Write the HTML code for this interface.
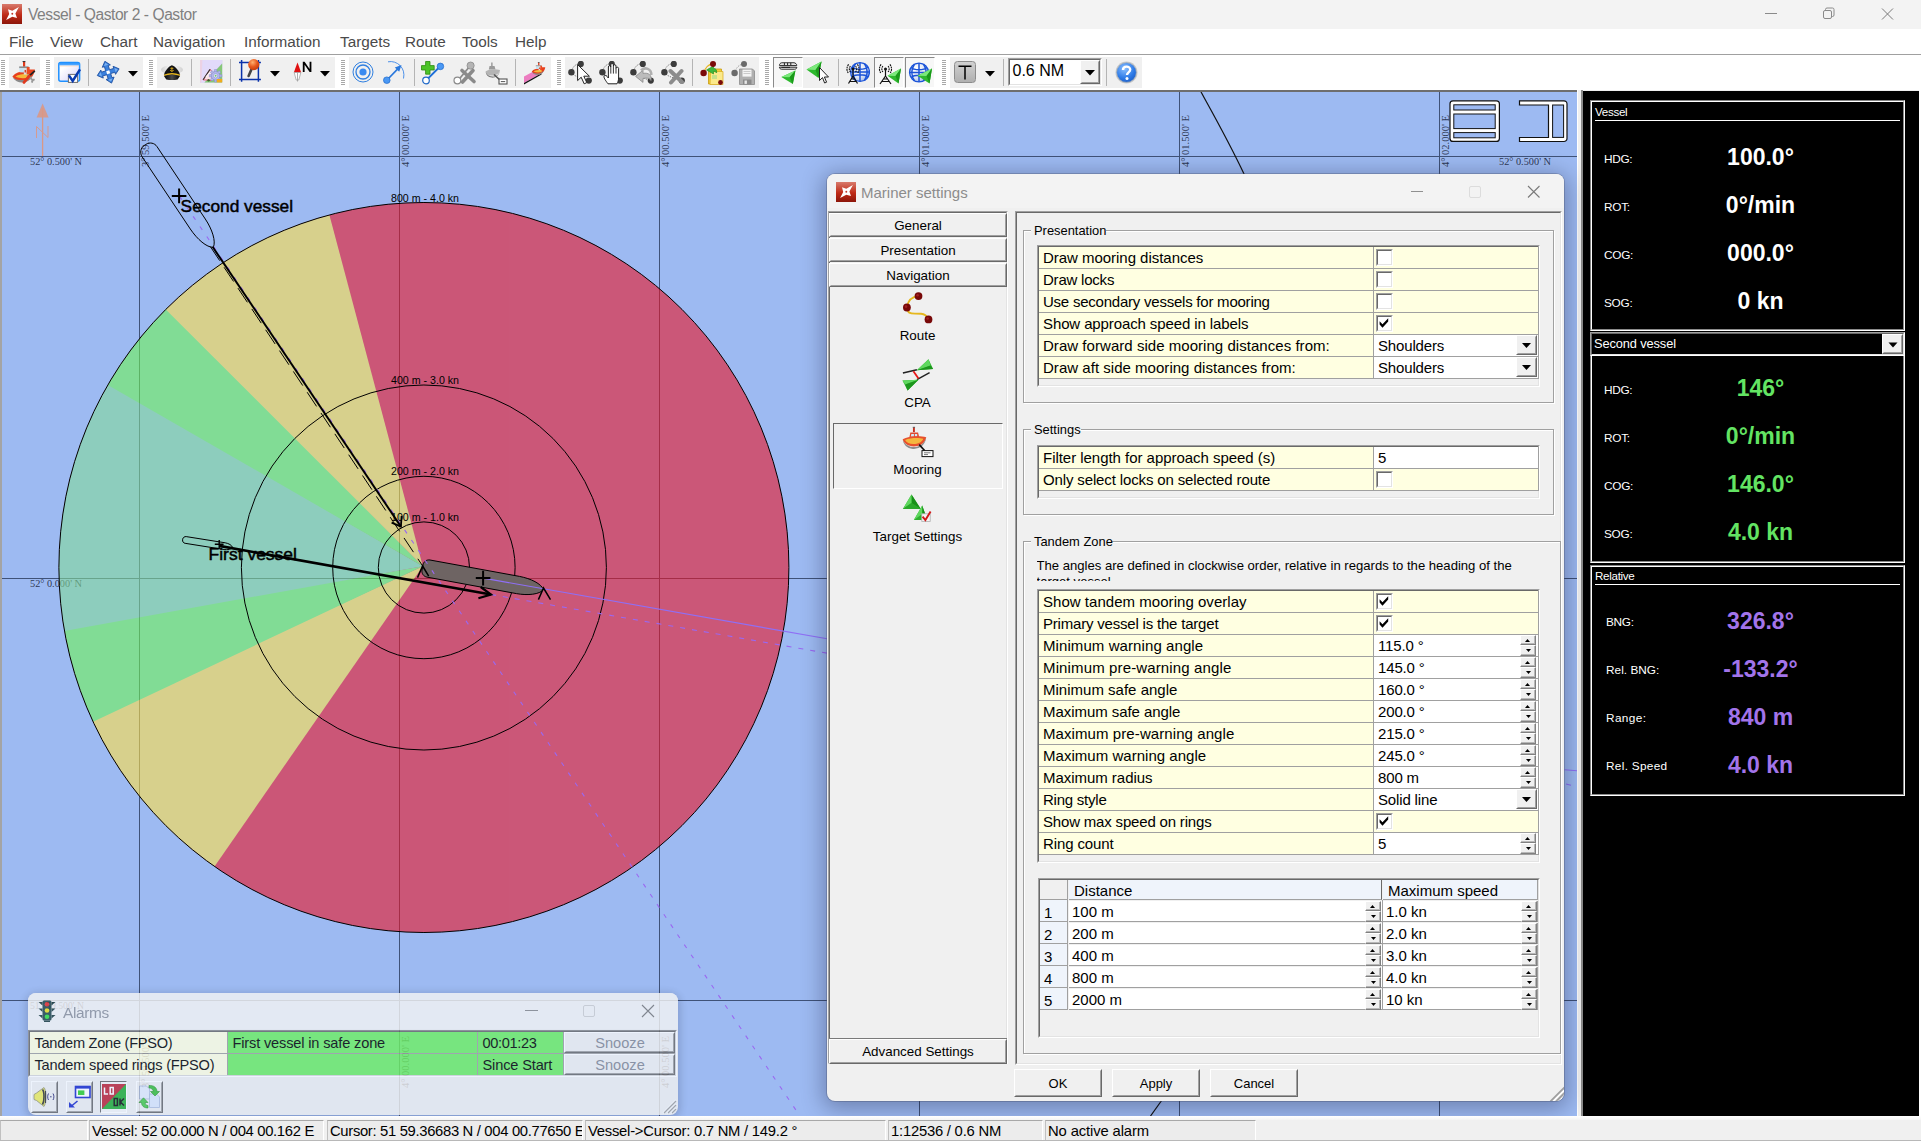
<!DOCTYPE html>
<html><head><meta charset="utf-8"><title>Qastor</title><style>
*{box-sizing:border-box;margin:0;padding:0}
html,body{width:1921px;height:1141px;overflow:hidden;background:#f0f0f0}
body{font-family:"Liberation Sans",sans-serif;position:relative;color:#000}
.abs{position:absolute}
.t{position:absolute;white-space:pre;line-height:1}
#title{left:0;top:0;width:1921px;height:29px;background:#f3f3f3}
#menu{left:0;top:29px;width:1921px;height:25px;background:#fff}
#menuline{left:0;top:54px;width:1921px;height:1px;background:#a0a0a0}
#toolbar{left:0;top:55px;width:1921px;height:35px;background:#fff}
#status{left:0;top:1116px;width:1921px;height:25px;background:#f0f0f0}
.menu .t{font-size:15.3px;color:#4a4a4a;top:5.2px}
</style></head><body>
<div id="title" class="abs">
<svg class="abs" style="left:2px;top:4px" width="20" height="20" viewBox="0 0 20 20"><defs><linearGradient id="lg1" x1="0" y1="0" x2="0" y2="1"><stop offset="0" stop-color="#d87a6c"/><stop offset="0.55" stop-color="#bf2a16"/><stop offset="1" stop-color="#8c160a"/></linearGradient></defs><rect width="20" height="20" fill="url(#lg1)"/><path d="M4.1 16.1L7.2 9.9L6 5.2L10.3 6.8L16.9 3.1L13.4 9.5L15 14.1L10.3 12.8Z" fill="#fff"/><circle cx="10.3" cy="9.8" r="0.95" fill="#c0382a"/></svg>
<span class="t" style="left:28px;top:7px;font-size:15.6px;color:#808080;letter-spacing:-0.45px">Vessel - Qastor 2 - Qastor</span>
<svg class="abs" style="left:1750px;top:0" width="171" height="29" viewBox="0 0 171 29" fill="none" stroke="#8a8a8a" stroke-width="1"><path d="M15 13.5H27"/><rect x="73.5" y="10.5" width="8" height="8" rx="1.5"/><path d="M75.5 10.5V9.5a1.5 1.5 0 0 1 1.5-1.5h5.5a1.5 1.5 0 0 1 1.5 1.5v5.5a1.5 1.5 0 0 1-1.5 1.5h-1"/><path d="M132 8.5L143 19.5M143 8.5L132 19.5" stroke="#7a7a7a"/></svg>
</div>
<div id="menu" class="abs menu">
<span class="t" style="left:9px">File</span>
<span class="t" style="left:50px">View</span>
<span class="t" style="left:100px">Chart</span>
<span class="t" style="left:153px">Navigation</span>
<span class="t" style="left:244px">Information</span>
<span class="t" style="left:340px">Targets</span>
<span class="t" style="left:405px">Route</span>
<span class="t" style="left:462px">Tools</span>
<span class="t" style="left:515px">Help</span>
</div><div id="menuline" class="abs"></div>
<div id="toolbar" class="abs"><svg class="abs" style="left:1px;top:5px" width="4" height="26"><rect x="0" y="0" width="4" height="1" fill="#a8a8a8"/><rect x="0" y="2" width="4" height="1" fill="#a8a8a8"/><rect x="0" y="4" width="4" height="1" fill="#a8a8a8"/><rect x="0" y="6" width="4" height="1" fill="#a8a8a8"/><rect x="0" y="8" width="4" height="1" fill="#a8a8a8"/><rect x="0" y="10" width="4" height="1" fill="#a8a8a8"/><rect x="0" y="12" width="4" height="1" fill="#a8a8a8"/><rect x="0" y="14" width="4" height="1" fill="#a8a8a8"/><rect x="0" y="16" width="4" height="1" fill="#a8a8a8"/><rect x="0" y="18" width="4" height="1" fill="#a8a8a8"/><rect x="0" y="20" width="4" height="1" fill="#a8a8a8"/><rect x="0" y="22" width="4" height="1" fill="#a8a8a8"/><rect x="0" y="24" width="4" height="1" fill="#a8a8a8"/></svg>
<div class="abs" style="left:9px;top:2px;width:31px;height:31px;background:#f0f0f0"></div>
<svg class="abs" style="left:12px;top:5px" width="24" height="24" viewBox="0 0 24 24"><rect x="11" y="1.8" width="2.2" height="5" fill="#e03a1c"/><rect x="10.6" y="1" width="2.8" height="1.1" fill="#333"/><path d="M0.4 16.6C3.5 12.8 8 11.6 12 11.6L17 9.4H22.9C22.8 13 20 19 14 21.2C9 22.6 3 21 0.4 16.6Z" fill="#e8401c"/><path d="M3.4 16.6C6 14.6 10 14 16.8 14L17 17.4C12 18.7 7 18.4 3.4 16.6Z" fill="#f4b83c"/><path d="M0.6 17.2C3 21.6 8 23 12.5 22.2C17 21.2 19.6 18 20.6 15.4C17 19.2 12 20.2 8 20C5 19.7 2.5 18.8 0.6 17.2Z" fill="#8a8a8a"/><path d="M7.2 6.4H16.6V8.2H7.2Z" fill="#8c8c8c"/><path d="M7.5 8.2H11.8V12.6L7.5 12.2Z" fill="#bfe4f8"/><path d="M11.8 8.2H14.8V14.6H11.8Z" fill="#dcdcdc"/><path d="M12.6 10H14V12.6H12.6Z" fill="#d04028"/><path d="M14.75 7H17.6V14.2H14.75Z" fill="#ec4a22"/><path d="M15.6 14.6L20.6 20.4M20.6 20.4L22.6 19.2M20.6 20.4L19.8 22.6" stroke="#9a9a9a" stroke-width="1.9" fill="none"/><path d="M22.8 10.8L17 16.2" stroke="#222" stroke-width="1.8"/><path d="M17.2 16L12 22.4" stroke="#e23a1e" stroke-width="2.8" stroke-linecap="round"/></svg>
<svg class="abs" style="left:46px;top:5px" width="4" height="26"><rect x="0" y="0" width="4" height="1" fill="#a8a8a8"/><rect x="0" y="2" width="4" height="1" fill="#a8a8a8"/><rect x="0" y="4" width="4" height="1" fill="#a8a8a8"/><rect x="0" y="6" width="4" height="1" fill="#a8a8a8"/><rect x="0" y="8" width="4" height="1" fill="#a8a8a8"/><rect x="0" y="10" width="4" height="1" fill="#a8a8a8"/><rect x="0" y="12" width="4" height="1" fill="#a8a8a8"/><rect x="0" y="14" width="4" height="1" fill="#a8a8a8"/><rect x="0" y="16" width="4" height="1" fill="#a8a8a8"/><rect x="0" y="18" width="4" height="1" fill="#a8a8a8"/><rect x="0" y="20" width="4" height="1" fill="#a8a8a8"/><rect x="0" y="22" width="4" height="1" fill="#a8a8a8"/><rect x="0" y="24" width="4" height="1" fill="#a8a8a8"/></svg>
<div class="abs" style="left:54px;top:2px;width:89px;height:31px;background:#f0f0f0"></div>
<svg class="abs" style="left:58px;top:6px" width="24" height="24" viewBox="0 0 24 24"><defs><linearGradient id="wg" x1="0" y1="0" x2="1" y2="1"><stop offset="0.25" stop-color="#fff"/><stop offset="1" stop-color="#d4d0fa"/></linearGradient><linearGradient id="wt" x1="0" y1="0" x2="0" y2="1"><stop offset="0" stop-color="#1e90ff"/><stop offset="1" stop-color="#62b0ff"/></linearGradient></defs><rect x="0.8" y="1.6" width="20.8" height="18.6" rx="2" fill="url(#wg)" stroke="#1e90ff" stroke-width="1.5"/><rect x="0.8" y="1.4" width="20.8" height="3.2" rx="1.2" fill="url(#wt)"/><path d="M1.6 5.1H20.8" stroke="#ffd9b8" stroke-width="0.7"/><rect x="10.4" y="13.4" width="9.2" height="8" fill="#fff" stroke="#6e6e6e" stroke-width="1"/><path d="M10.9 14.4L14.7 19.9L22 8.4" stroke="#0a3ab0" stroke-width="2.5" fill="none"/></svg>
<div class="abs" style="left:88.0px;top:4px;width:1.3px;height:27px;background:#b4b4b4"></div>
<svg class="abs" style="left:96px;top:6px" width="24" height="24" viewBox="0 0 24 24"><g transform="rotate(-17 12.2 11.2) translate(0.2 -0.8)" fill="#3a80dc" stroke="#1c4fa0" stroke-width="0.8" stroke-linejoin="round"><path d="M12 0.6L16.2 5.6H14V10H18.4V7.800L23.400 12L18.400 16.200V14H14V18.400H16.200L12 23.400L7.800 18.400H10V14H5.600V16.200L0.600 12L5.600 7.800V10H10V5.600H7.800Z"/></g><g transform="rotate(-17 12.2 11.2) translate(0.2 -0.8)"><rect x="10.4" y="10.4" width="3.2" height="3.2" fill="#fff"/><path d="M12 2.2L14.2 4.800H9.800ZM21.800 12L19.200 9.800V14.200ZM2.200 12L4.800 9.800V14.200ZM12 21.800L14.200 19.200H9.800Z" fill="#7ab0f0"/></g></svg>
<svg class="abs" style="left:127.6px;top:16px" width="10" height="6"><path d="M0 0H10L5 5.6Z" fill="#000"/></svg>
<svg class="abs" style="left:149px;top:5px" width="4" height="26"><rect x="0" y="0" width="4" height="1" fill="#a8a8a8"/><rect x="0" y="2" width="4" height="1" fill="#a8a8a8"/><rect x="0" y="4" width="4" height="1" fill="#a8a8a8"/><rect x="0" y="6" width="4" height="1" fill="#a8a8a8"/><rect x="0" y="8" width="4" height="1" fill="#a8a8a8"/><rect x="0" y="10" width="4" height="1" fill="#a8a8a8"/><rect x="0" y="12" width="4" height="1" fill="#a8a8a8"/><rect x="0" y="14" width="4" height="1" fill="#a8a8a8"/><rect x="0" y="16" width="4" height="1" fill="#a8a8a8"/><rect x="0" y="18" width="4" height="1" fill="#a8a8a8"/><rect x="0" y="20" width="4" height="1" fill="#a8a8a8"/><rect x="0" y="22" width="4" height="1" fill="#a8a8a8"/><rect x="0" y="24" width="4" height="1" fill="#a8a8a8"/></svg>
<div class="abs" style="left:157px;top:2px;width:178px;height:31px;background:#f0f0f0"></div>
<svg class="abs" style="left:161px;top:8px" width="22" height="18" viewBox="0 0 22 18"><defs><linearGradient id="cpw" x1="0" y1="0" x2="1" y2="0"><stop offset="0" stop-color="#d0d0d0"/><stop offset="0.5" stop-color="#ffffff"/><stop offset="1" stop-color="#d0d0d0"/></linearGradient><linearGradient id="cpv" x1="0" y1="0" x2="1" y2="0"><stop offset="0" stop-color="#000"/><stop offset="0.5" stop-color="#4a4a4a"/><stop offset="1" stop-color="#000"/></linearGradient></defs><ellipse cx="11" cy="6.7" rx="11" ry="4.4" fill="url(#cpw)"/><path d="M3 12.6C3 8.500 8 3 10.9 2.300C14 3 19 8.500 19 12.600Z" fill="#141414"/><path d="M3 12.400C8 10.300 14 10.300 19 12.400" stroke="#e8b820" stroke-width="1.400" fill="none"/><path d="M3 13C8 11.200 14 11.200 19 13L16.600 16.400C13 17.200 9 17.200 5.300 16.400Z" fill="url(#cpv)"/><path d="M10.900 4.200V8.400M9.400 5.400H12.400M9.300 7C9.800 8.800 12 8.800 12.500 7" stroke="#d8a818" stroke-width="0.9" fill="none"/></svg>
<div class="abs" style="left:190.5px;top:4px;width:1.3px;height:27px;background:#b4b4b4"></div>
<svg class="abs" style="left:200px;top:5px" width="23" height="23" viewBox="0 0 23 23"><rect x="0" y="0" width="22.200" height="22.400" fill="#cdc4f4"/><path d="M0 0H22.200V3L4.400 22.400H0Z" fill="#e2dafa"/><path d="M0 0H2.400L1.400 22.400H0Z" fill="#ecd2e4"/><path d="M22.200 3.600V22.400H4.400Z" fill="#86c878"/><path d="M3.100 19.800L10 9.400C12.600 11 13.200 16 11.200 20.400Z" fill="#fbe0e6" stroke="#e05060" stroke-width="0.9"/><path d="M3.100 19.800L10 9.400" stroke="#333" stroke-width="1.100"/><path d="M6 17C7.500 15 9 13.500 10.500 12.500" stroke="#fff" stroke-width="1.500" opacity="0.7"/><circle cx="8.600" cy="20.300" r="1.200" fill="#406030"/><g transform="translate(15.600 15.800)" fill="#b4b8ec" stroke="#8088c8" stroke-width="0.5"><path d="M-1.200 -6.200H1.200V6.200H-1.200ZM-6.200 -1.200H6.200V1.200H-6.200Z"/><path d="M-1.200 -6.200H1.200V6.200H-1.200ZM-6.200 -1.200H6.200V1.200H-6.200Z" transform="rotate(45)"/><circle r="4.200"/><circle r="2.100" fill="#eef0ff"/><circle r="1" fill="#70c070" stroke="none"/></g><rect x="16.800" y="19" width="5.400" height="3.400" fill="#f0ac1c"/></svg>
<div class="abs" style="left:230.0px;top:4px;width:1.3px;height:27px;background:#b4b4b4"></div>
<svg class="abs" style="left:239px;top:4px" width="22" height="23" viewBox="0 0 22 23"><path d="M2.600 1V22.800M19.400 1V22.800M0 3.500H21.900M0 20.400H21.900" stroke="#0a32aa" stroke-width="1.500" fill="none"/><path d="M12.400 10.600L9.600 17" stroke="#454545" stroke-width="2.600" stroke-linecap="round"/><defs><radialGradient id="pin" cx="0.4" cy="0.3" r="0.8"><stop offset="0" stop-color="#ffb070"/><stop offset="0.5" stop-color="#e8581c"/><stop offset="1" stop-color="#b83208"/></radialGradient></defs><circle cx="14.750" cy="5.600" r="5.600" fill="url(#pin)"/></svg>
<svg class="abs" style="left:269.6px;top:16px" width="10" height="6"><path d="M0 0H10L5 5.6Z" fill="#000"/></svg>
<svg class="abs" style="left:293px;top:6px" width="20" height="22" viewBox="0 0 20 22"><path d="M4.5 1.5L0.8 11.5H8.2Z" fill="#e01010"/><path d="M1.2 11.5H7.8L5.8 19H3.2Z" fill="#fff" stroke="#999" stroke-width="0.7"/><path d="M4.5 11.5V20.5" stroke="#999" stroke-width="0.8"/><path d="M9.8 11V0.8H11.6L16.6 8V0.8H18.4V11H16.6L11.6 3.8V11Z" fill="#000"/></svg>
<svg class="abs" style="left:320px;top:16px" width="10" height="6"><path d="M0 0H10L5 5.6Z" fill="#000"/></svg>
<svg class="abs" style="left:341px;top:5px" width="4" height="26"><rect x="0" y="0" width="4" height="1" fill="#a8a8a8"/><rect x="0" y="2" width="4" height="1" fill="#a8a8a8"/><rect x="0" y="4" width="4" height="1" fill="#a8a8a8"/><rect x="0" y="6" width="4" height="1" fill="#a8a8a8"/><rect x="0" y="8" width="4" height="1" fill="#a8a8a8"/><rect x="0" y="10" width="4" height="1" fill="#a8a8a8"/><rect x="0" y="12" width="4" height="1" fill="#a8a8a8"/><rect x="0" y="14" width="4" height="1" fill="#a8a8a8"/><rect x="0" y="16" width="4" height="1" fill="#a8a8a8"/><rect x="0" y="18" width="4" height="1" fill="#a8a8a8"/><rect x="0" y="20" width="4" height="1" fill="#a8a8a8"/><rect x="0" y="22" width="4" height="1" fill="#a8a8a8"/><rect x="0" y="24" width="4" height="1" fill="#a8a8a8"/></svg>
<div class="abs" style="left:349px;top:2px;width:202px;height:31px;background:#f0f0f0"></div>
<svg class="abs" style="left:352px;top:6px" width="22" height="22" viewBox="0 0 22 22"><circle cx="11" cy="11" r="10" fill="none" stroke="#2f7fe0" stroke-width="1"/><circle cx="11" cy="11" r="7" fill="none" stroke="#2f7fe0" stroke-width="1.3"/><circle cx="11" cy="11" r="3.6" fill="#3a8af0"/></svg>
<svg class="abs" style="left:383px;top:6px" width="24" height="24" viewBox="0 0 24 24"><path d="M5 0.8C14 -1 23 7 20.5 17.5" stroke="#3a86e8" stroke-width="0.9" fill="none"/><path d="M4 19L15.5 7.2" stroke="#2a78dc" stroke-width="1.7"/><path d="M18.5 4L11.8 6.4L16.2 10.8Z" fill="#2a78dc"/><circle cx="3.8" cy="19.2" r="3.3" fill="#4a98f4" stroke="#1f68c8" stroke-width="0.7"/></svg>
<div class="abs" style="left:414.0px;top:4px;width:1.3px;height:27px;background:#b4b4b4"></div>
<svg class="abs" style="left:421px;top:6px" width="24" height="24" viewBox="0 0 24 24"><path d="M5 19.5L19.5 5" stroke="#1f6fd8" stroke-width="1.8"/><circle cx="19.4" cy="5.4" r="3.3" fill="#4a98f4" stroke="#1f68c8" stroke-width="0.7"/><circle cx="5" cy="19.5" r="3.3" fill="#fff" stroke="#1f68c8" stroke-width="1.2"/><path d="M4.6 0.5H9V4.6H13.2V9H9V13.2H4.6V9H0.5V4.6H4.6Z" fill="#4dc428" stroke="#2c8a10" stroke-width="0.8"/></svg>
<svg class="abs" style="left:453px;top:6px" width="24" height="24" viewBox="0 0 24 24"><path d="M5 19.5L17 5" stroke="#8a8a8a" stroke-width="1.8"/><circle cx="17.6" cy="4.6" r="3.6" fill="#b4b4b4" stroke="#8a8a8a" stroke-width="0.8"/><circle cx="4.4" cy="19.5" r="3.4" fill="#fff" stroke="#8a8a8a" stroke-width="1.2"/><path d="M9 9.5L21 20.5M20 9.5L9.5 21" stroke="#8a8a8a" stroke-width="3.6" stroke-linecap="round"/></svg>
<svg class="abs" style="left:485px;top:7px" width="24" height="24" viewBox="0 0 24 24"><rect x="6.3" y="0.5" width="1.2" height="4" fill="#888"/><path d="M4.5 4H9.5L10.5 7.5H3.8Z" fill="#9a9a9a"/><path d="M0.5 9.5C4 7 10 6.5 15 8C14 12 10.5 13.8 6.5 13.6C3.5 13.4 1.2 12 0.5 9.5Z" fill="#b4b4b4"/><path d="M0.6 10C2.5 14 7 15 10 14.2C12.5 13.5 14.4 11.5 15 8C14.4 13.6 10.5 16 6.5 15.6C3 15.2 1 13 0.6 10Z" fill="#7c7c7c"/><path d="M9 12.5L16 19" stroke="#555" stroke-width="1.6"/><rect x="14" y="17" width="8" height="5" fill="#fff" stroke="#555" stroke-width="1.1"/><path d="M15.8 19.6H20.2" stroke="#555" stroke-width="1"/></svg>
<div class="abs" style="left:515.0px;top:4px;width:1.3px;height:27px;background:#b4b4b4"></div>
<svg class="abs" style="left:523px;top:6px" width="24" height="24" viewBox="0 0 24 24"><path d="M1 15.5L14 8.5L18 12.5L1 22Z" fill="#ec7cc0"/><path d="M1 22L18 12.5L18.6 13.6L1 23.4Z" fill="#111"/><g transform="translate(8.5 0.5) scale(0.6)"><rect x="11" y="1.8" width="2.2" height="5" fill="#e03a1c"/><rect x="10.6" y="1" width="2.8" height="1.1" fill="#333"/><path d="M0.4 16.6C3.5 12.8 8 11.6 12 11.6L17 9.4H22.9C22.8 13 20 19 14 21.2C9 22.6 3 21 0.4 16.6Z" fill="#e8401c"/><path d="M3.4 16.6C6 14.6 10 14 16.8 14L17 17.4C12 18.7 7 18.4 3.4 16.6Z" fill="#f4b83c"/><path d="M0.6 17.2C3 21.6 8 23 12.5 22.2C17 21.2 19.6 18 20.6 15.4C17 19.2 12 20.2 8 20C5 19.7 2.5 18.8 0.6 17.2Z" fill="#8a8a8a"/><path d="M7.2 6.4H16.6V8.2H7.2Z" fill="#8c8c8c"/><path d="M7.5 8.2H11.8V12.6L7.5 12.2Z" fill="#bfe4f8"/><path d="M11.8 8.2H14.8V14.6H11.8Z" fill="#dcdcdc"/><path d="M12.6 10H14V12.6H12.6Z" fill="#d04028"/><path d="M14.75 7H17.6V14.2H14.75Z" fill="#ec4a22"/></g></svg>
<svg class="abs" style="left:557px;top:5px" width="4" height="26"><rect x="0" y="0" width="4" height="1" fill="#a8a8a8"/><rect x="0" y="2" width="4" height="1" fill="#a8a8a8"/><rect x="0" y="4" width="4" height="1" fill="#a8a8a8"/><rect x="0" y="6" width="4" height="1" fill="#a8a8a8"/><rect x="0" y="8" width="4" height="1" fill="#a8a8a8"/><rect x="0" y="10" width="4" height="1" fill="#a8a8a8"/><rect x="0" y="12" width="4" height="1" fill="#a8a8a8"/><rect x="0" y="14" width="4" height="1" fill="#a8a8a8"/><rect x="0" y="16" width="4" height="1" fill="#a8a8a8"/><rect x="0" y="18" width="4" height="1" fill="#a8a8a8"/><rect x="0" y="20" width="4" height="1" fill="#a8a8a8"/><rect x="0" y="22" width="4" height="1" fill="#a8a8a8"/><rect x="0" y="24" width="4" height="1" fill="#a8a8a8"/></svg>
<div class="abs" style="left:565px;top:2px;width:194px;height:31px;background:#f0f0f0"></div>
<svg class="abs" style="left:568px;top:6px" width="24" height="24" viewBox="0 0 24 24"><path d="M3.5 11C4.500 5.500 7.500 3.200 12.600 2.100M3.500 11C5.500 15.500 12 16.500 20.500 19.500" stroke="#777" stroke-width="1" stroke-dasharray="1.300 1.100" fill="none"/><circle cx="12.800" cy="2.900" r="3.100" fill="#3c3c3c"/><circle cx="3.400" cy="11.200" r="3.200" fill="#3c3c3c"/><circle cx="20.800" cy="19.600" r="3.100" fill="#3c3c3c"/><path d="M9.600 3.600V19.600L13.200 16.200L16.200 22.800L18.800 21.600L15.800 15.200H21.400Z" fill="#fff" stroke="#222" stroke-width="1"/></svg>
<svg class="abs" style="left:599px;top:6px" width="24" height="24" viewBox="0 0 24 24"><path d="M3.5 11C4.500 5.500 7.500 3.200 12.600 2.100M3.500 11C5.500 15.500 12 16.500 20.500 19.500" stroke="#777" stroke-width="1" stroke-dasharray="1.300 1.100" fill="none"/><circle cx="12.800" cy="2.900" r="3.100" fill="#3c3c3c"/><circle cx="3.400" cy="11.200" r="3.200" fill="#3c3c3c"/><circle cx="20.800" cy="19.600" r="3.100" fill="#3c3c3c"/><path d="M9 22.800C6.500 19.500 4.200 16.200 5.200 14.800C6.400 13.600 8.200 15.400 9.400 17V6C9.400 4.200 11.800 4.200 11.800 6V3.800C11.800 2 14.400 2 14.400 3.800V5C14.400 3.200 17 3.200 17 5V7.400C17 5.800 19.600 5.800 19.600 7.400V17C19.600 19.600 18.800 21.200 18 22.800Z" fill="#fff" stroke="#222" stroke-width="1"/><path d="M11.800 6V12.600M14.400 5V12.600M17 7.400V12.600" stroke="#222" stroke-width="0.900"/></svg>
<svg class="abs" style="left:630px;top:6px" width="24" height="24" viewBox="0 0 24 24"><path d="M3.5 11C4.500 5.500 7.500 3.200 12.600 2.100M3.500 11C5.500 15.500 12 16.500 20.500 19.500" stroke="#777" stroke-width="1" stroke-dasharray="1.300 1.100" fill="none"/><circle cx="12.800" cy="2.900" r="3.100" fill="#3c3c3c"/><circle cx="3.400" cy="11.200" r="3.200" fill="#3c3c3c"/><circle cx="20.800" cy="19.600" r="3.100" fill="#3c3c3c"/><path d="M5.600 15.400L13 9.200V12.400C18.600 11.400 22 14 21 19.600C20 17.200 17.400 16.600 13 17.400V21.400Z" fill="#bcbcbc" stroke="#8a8a8a" stroke-width="0.800"/><path d="M11 9.400C15 5.600 21.600 7.600 21.200 14" stroke="#b0b0b0" stroke-width="2.600" fill="none"/></svg>
<svg class="abs" style="left:661px;top:6px" width="24" height="24" viewBox="0 0 24 24"><path d="M3.5 11C4.500 5.500 7.500 3.200 12.600 2.100M3.500 11C5.500 15.500 12 16.500 20.500 19.500" stroke="#777" stroke-width="1" stroke-dasharray="1.300 1.100" fill="none"/><circle cx="12.800" cy="2.900" r="3.100" fill="#3c3c3c"/><circle cx="3.400" cy="11.200" r="3.200" fill="#3c3c3c"/><circle cx="20.800" cy="19.600" r="3.100" fill="#3c3c3c"/><path d="M9.5 10L21 21M20.5 10L10 21.5" stroke="#8c8c8c" stroke-width="4" stroke-linecap="round"/></svg>
<div class="abs" style="left:692.0px;top:4px;width:1.3px;height:27px;background:#b4b4b4"></div>
<svg class="abs" style="left:700px;top:6px" width="24" height="24" viewBox="0 0 24 24"><path d="M4 12C5 6 8 4 13 2.5" stroke="#e6b422" stroke-width="1.4" fill="none"/><path d="M8.5 8H21.5V23H8.5Z" fill="#f2cf3a" stroke="#c89a10" stroke-width="0.8"/><path d="M10.5 10.5H23V23.5H10Z" fill="#fbe98a" stroke="#d8aa18" stroke-width="0.7"/><path d="M6.5 9L13.5 5V7.4C16 7.4 17 9 16.6 12C15.6 10.6 14.6 10.4 13.5 10.6V13Z" fill="#3cb83c" stroke="#1e8a1e" stroke-width="0.6"/><circle cx="13" cy="3" r="3" fill="#7a0a0a"/><circle cx="3.6" cy="12" r="3.2" fill="#7a0a0a"/><circle cx="20.5" cy="21.5" r="2.4" fill="#7a0a0a"/><rect x="12" y="14" width="5" height="4" fill="#b8e08a" opacity="0.8"/></svg>
<svg class="abs" style="left:731px;top:6px" width="24" height="24" viewBox="0 0 24 24"><path d="M4 12C5 6 8 4 13 2.5" stroke="#8a8a8a" stroke-width="0.9" stroke-dasharray="1.2 1.2" fill="none"/><circle cx="13" cy="3" r="3" fill="#6a6a6a"/><circle cx="3.6" cy="12" r="3.2" fill="#6a6a6a"/><path d="M8.5 8H21.5L23.5 10V23.5H8.5Z" fill="#b0b0b0" stroke="#8a8a8a" stroke-width="0.8"/><rect x="11.5" y="8.6" width="9" height="7" fill="#f4f4f4"/><path d="M12.5 10.5H19.5M12.5 12.5H19.5" stroke="#c0c0c0" stroke-width="0.8"/><rect x="12" y="18.5" width="8.5" height="5" fill="#8a8a8a"/><rect x="13.5" y="19.5" width="2.4" height="3.4" fill="#e8e8e8"/></svg>
<svg class="abs" style="left:765px;top:5px" width="4" height="26"><rect x="0" y="0" width="4" height="1" fill="#a8a8a8"/><rect x="0" y="2" width="4" height="1" fill="#a8a8a8"/><rect x="0" y="4" width="4" height="1" fill="#a8a8a8"/><rect x="0" y="6" width="4" height="1" fill="#a8a8a8"/><rect x="0" y="8" width="4" height="1" fill="#a8a8a8"/><rect x="0" y="10" width="4" height="1" fill="#a8a8a8"/><rect x="0" y="12" width="4" height="1" fill="#a8a8a8"/><rect x="0" y="14" width="4" height="1" fill="#a8a8a8"/><rect x="0" y="16" width="4" height="1" fill="#a8a8a8"/><rect x="0" y="18" width="4" height="1" fill="#a8a8a8"/><rect x="0" y="20" width="4" height="1" fill="#a8a8a8"/><rect x="0" y="22" width="4" height="1" fill="#a8a8a8"/><rect x="0" y="24" width="4" height="1" fill="#a8a8a8"/></svg>
<div class="abs" style="left:773px;top:2px;width:162px;height:31px;background:#f0f0f0"></div>
<div class="abs" style="left:773px;top:2px;width:30px;height:31px;background:#f7f7f7;border:1px solid #8a8a8a;border-right-color:#fff;border-bottom-color:#fff"></div>
<svg class="abs" style="left:776px;top:7px" width="24" height="25" viewBox="0 0 24 25"><path d="M5.800 0.800H18C19.400 0.800 20.800 2.200 20.800 3.400H3.400C3.400 2.200 4.400 0.800 5.800 0.800Z" fill="#fff" stroke="#222" stroke-width="1"/><path d="M3.400 5.200C3.400 6.400 4.400 7.200 5.800 7.200H18.600C20 7.200 20.800 6.400 20.800 5.200Z" fill="#fff" stroke="#222" stroke-width="1"/><path d="M8.400 0.800V3.400M11.600 0.800V3.400M14.800 0.800V3.400M5.500 5.400H14" stroke="#222" stroke-width="1"/><path d="M19.400 8.500L5.400 15L16.800 22Z" fill="#2eb82e"/><path d="M19.400 8.500L5.400 15L13.600 15.200Z" fill="#7be87b"/><path d="M19.400 8.500L13.600 15.200L16.800 22Z" fill="#1a9a1a"/></svg>
<svg class="abs" style="left:806px;top:6px" width="24" height="24" viewBox="0 0 24 24"><path d="M15.5 0.5L0.5 8.5L12.5 17Z" fill="#2eb82e"/><path d="M15.5 0.5L0.5 8.5L9.5 9Z" fill="#7be87b"/><path d="M15.5 0.5L9.5 9L12.5 17Z" fill="#1a9a1a"/><path d="M13.5 6.5V19.5L16.5 16.6L18.6 22L20.6 21.2L18.4 16H22.5Z" fill="#fff" stroke="#222" stroke-width="1"/></svg>
<div class="abs" style="left:838.0px;top:4px;width:1.3px;height:27px;background:#b4b4b4"></div>
<svg class="abs" style="left:846px;top:6px" width="24" height="24" viewBox="0 0 24 24"><defs><radialGradient id="gl1" cx="0.35" cy="0.3" r="0.8"><stop offset="0" stop-color="#ffffff"/><stop offset="0.6" stop-color="#dfe6f4"/><stop offset="1" stop-color="#9ab4e8"/></radialGradient></defs><circle cx="14" cy="11" r="9.400" fill="url(#gl1)" stroke="#1c54d8" stroke-width="1.400"/><path d="M6 6C9 9 19 9 22 6M4.600 11H23.400M6 16C9 13 19 13 22 16M14 1.500V20.500M9.500 2.500C6 8 6 14 9.500 19.500M18.500 2.500C22 8 22 14 18.500 19.500" stroke="#1c54d8" stroke-width="1.500" fill="none"/><path d="M7 8V15M7 15L2.500 22.500M7 15L11.500 22.500M4 20.500H10M5.200 18H8.800" stroke="#111" stroke-width="1.200" fill="none"/><circle cx="7" cy="8" r="1.500" fill="#111"/><path d="M4.400 5C3 7 3 9 4.400 11M9.600 5C11 7 11 9 9.600 11M2.600 3.400C0.400 6.400 0.400 9.600 2.600 12.600M11.400 3.400C13.600 6.400 13.600 9.600 11.400 12.600" stroke="#111" stroke-width="1.100" fill="none" stroke-dasharray="1.800 0.700"/></svg>
<div class="abs" style="left:874px;top:2px;width:30px;height:31px;background:#f7f7f7;border:1px solid #8a8a8a;border-right-color:#fff;border-bottom-color:#fff"></div>
<svg class="abs" style="left:877px;top:6px" width="25" height="24" viewBox="0 0 25 24"><path d="M8.500 8V15M8.500 15L3 23M8.500 15L14 23M5 20.500H12M6.600 18H10.400" stroke="#111" stroke-width="1.200" fill="none"/><circle cx="8.500" cy="8" r="1.500" fill="#111"/><path d="M5.900 5C4.500 7 4.500 9 5.900 11M11.100 5C12.500 7 12.500 9 11.100 11M4.100 3.400C1.900 6.400 1.900 9.600 4.100 12.600M12.900 3.400C15.100 6.400 15.100 9.600 12.900 12.600" stroke="#111" stroke-width="1.100" fill="none" stroke-dasharray="1.800 0.700"/><path d="M24 7.500L10.500 14.800L21.500 22.500Z" fill="#2eb82e"/><path d="M24 7.500L10.500 14.800L18.500 15Z" fill="#7be87b"/><path d="M24 7.500L18.500 15L21.500 22.500Z" fill="#1a9a1a"/></svg>
<div class="abs" style="left:905px;top:2px;width:30px;height:31px;background:#f7f7f7;border:1px solid #8a8a8a;border-right-color:#fff;border-bottom-color:#fff"></div>
<svg class="abs" style="left:908px;top:6px" width="25" height="24" viewBox="0 0 25 24"><defs><radialGradient id="gl2" cx="0.35" cy="0.3" r="0.8"><stop offset="0" stop-color="#ffffff"/><stop offset="0.6" stop-color="#dfe6f4"/><stop offset="1" stop-color="#9ab4e8"/></radialGradient></defs><circle cx="11" cy="11.500" r="9.400" fill="url(#gl2)" stroke="#1c54d8" stroke-width="1.400"/><path d="M3 6.500C6 9.500 16 9.500 19 6.500M1.600 11.500H20.400M3 16.500C6 13.500 16 13.500 19 16.500M11 2V21M6.500 3C3 8.500 3 14.500 6.500 20M15.500 3C19 8.500 19 14.500 15.500 20" stroke="#1c54d8" stroke-width="1.500" fill="none"/><path d="M24 7.500L9.500 14.800L21.500 22.500Z" fill="#2eb82e"/><path d="M24 7.500L9.500 14.800L18.500 15Z" fill="#7be87b"/><path d="M24 7.500L18.500 15L21.500 22.500Z" fill="#1a9a1a"/></svg>
<svg class="abs" style="left:942px;top:5px" width="4" height="26"><rect x="0" y="0" width="4" height="1" fill="#a8a8a8"/><rect x="0" y="2" width="4" height="1" fill="#a8a8a8"/><rect x="0" y="4" width="4" height="1" fill="#a8a8a8"/><rect x="0" y="6" width="4" height="1" fill="#a8a8a8"/><rect x="0" y="8" width="4" height="1" fill="#a8a8a8"/><rect x="0" y="10" width="4" height="1" fill="#a8a8a8"/><rect x="0" y="12" width="4" height="1" fill="#a8a8a8"/><rect x="0" y="14" width="4" height="1" fill="#a8a8a8"/><rect x="0" y="16" width="4" height="1" fill="#a8a8a8"/><rect x="0" y="18" width="4" height="1" fill="#a8a8a8"/><rect x="0" y="20" width="4" height="1" fill="#a8a8a8"/><rect x="0" y="22" width="4" height="1" fill="#a8a8a8"/><rect x="0" y="24" width="4" height="1" fill="#a8a8a8"/></svg>
<div class="abs" style="left:950px;top:2px;width:192px;height:31px;background:#f0f0f0"></div>
<div class="abs" style="left:954px;top:6px;width:22px;height:22px;border-radius:3.5px;background:linear-gradient(#d0d0d0,#b0b0b0);border:1px solid #8c8c8c"></div>
<svg class="abs" style="left:958px;top:10px" width="14" height="15"><path d="M0.5 1.2H13.5M7 1.2V14.5" stroke="#000" stroke-width="1.5"/></svg>
<svg class="abs" style="left:985px;top:16px" width="10" height="6"><path d="M0 0H10L5 5.6Z" fill="#000"/></svg>
<div class="abs" style="left:1003.0px;top:4px;width:1.3px;height:27px;background:#b4b4b4"></div>
<div class="abs" style="left:1008px;top:3px;width:94px;height:28px;background:#fff;border:1px solid #a0a0a0;border-right-color:#fff;border-bottom-color:#fff"></div>
<div class="abs" style="left:1009px;top:4px;width:92px;height:26px;border:1px solid #696969;border-right-color:#e3e3e3;border-bottom-color:#e3e3e3"></div>
<span class="t" style="left:1012.5px;top:8.2px;font-size:16px">0.6 NM</span>
<div class="abs" style="left:1080px;top:5px;width:20px;height:24px;background:#f0f0f0;border:1px solid #fff;border-right-color:#696969;border-bottom-color:#696969"></div>
<div class="abs" style="left:1081px;top:6px;width:18px;height:22px;border:1px solid #f0f0f0;border-right-color:#a0a0a0;border-bottom-color:#a0a0a0"></div>
<svg class="abs" style="left:1085px;top:15px" width="10" height="6"><path d="M0 0H10L5 5.6Z" fill="#000"/></svg>
<div class="abs" style="left:1106.0px;top:4px;width:1.3px;height:27px;background:#b4b4b4"></div>
<svg class="abs" style="left:1115px;top:6px" width="23" height="23" viewBox="0 0 23 23"><defs><radialGradient id="hg" cx="0.4" cy="0.3" r="0.8"><stop offset="0" stop-color="#8cc0ff"/><stop offset="0.6" stop-color="#2f7ce8"/><stop offset="1" stop-color="#1a58c0"/></radialGradient></defs><circle cx="11.5" cy="11.5" r="11" fill="#c8c8c8"/><circle cx="11.5" cy="11.5" r="9.8" fill="url(#hg)" stroke="#9ab" stroke-width="0.6"/><path d="M8 9C8 4.6 15.2 4.6 15.2 8.6C15.2 11.4 12 11.4 12 14" stroke="#fff" stroke-width="2.4" fill="none"/><circle cx="12" cy="17.4" r="1.5" fill="#fff"/></svg></div>
<div class="abs" style="left:0;top:90px;width:1579px;height:1026px;background:#a4a4a4"></div><div class="abs" style="left:0;top:90px;width:1579px;height:2px;background:#6e6e6e"></div>
<div class="abs" style="left:2px;top:92px;width:1575px;height:1024px;overflow:hidden;background:#9dbaf2"><svg class="abs" style="left:-2px;top:-92px" width="1921" height="1141" viewBox="0 0 1921 1141">
<path d="M139.5 92V1116M399.5 92V1116M659.5 92V1116M919.5 92V1116M1179.5 92V1116M1439.5 92V1116M2 156.5H1577M2 578.5H1577M2 1000.5H1577" stroke="#3f5278" stroke-width="1" fill="none" shape-rendering="crispEdges"/>
<text transform="translate(148.5 167) rotate(-90)" font-family="Liberation Serif" font-size="10" fill="#27304a" fill-opacity="0.95" lengthAdjust="spacingAndGlyphs" textLength="52">3° 59.500' E</text>
<text transform="translate(408.5 167) rotate(-90)" font-family="Liberation Serif" font-size="10" fill="#27304a" fill-opacity="0.95" lengthAdjust="spacingAndGlyphs" textLength="52">4° 00.000' E</text>
<text transform="translate(668.5 167) rotate(-90)" font-family="Liberation Serif" font-size="10" fill="#27304a" fill-opacity="0.95" lengthAdjust="spacingAndGlyphs" textLength="52">4° 00.500' E</text>
<text transform="translate(928.5 167) rotate(-90)" font-family="Liberation Serif" font-size="10" fill="#27304a" fill-opacity="0.95" lengthAdjust="spacingAndGlyphs" textLength="52">4° 01.000' E</text>
<text transform="translate(1188.5 167) rotate(-90)" font-family="Liberation Serif" font-size="10" fill="#27304a" fill-opacity="0.95" lengthAdjust="spacingAndGlyphs" textLength="52">4° 01.500' E</text>
<text transform="translate(1448.5 167) rotate(-90)" font-family="Liberation Serif" font-size="10" fill="#27304a" fill-opacity="0.95" lengthAdjust="spacingAndGlyphs" textLength="52">4° 02.000' E</text>
<text transform="translate(148.5 1088) rotate(-90)" font-family="Liberation Serif" font-size="10" fill="#27304a" fill-opacity="0.95" lengthAdjust="spacingAndGlyphs" textLength="52">3° 59.500' E</text>
<text transform="translate(408.5 1088) rotate(-90)" font-family="Liberation Serif" font-size="10" fill="#27304a" fill-opacity="0.95" lengthAdjust="spacingAndGlyphs" textLength="52">4° 00.000' E</text>
<text transform="translate(668.5 1088) rotate(-90)" font-family="Liberation Serif" font-size="10" fill="#27304a" fill-opacity="0.95" lengthAdjust="spacingAndGlyphs" textLength="52">4° 00.500' E</text>
<text x="30" y="165" font-family="Liberation Serif" font-size="10" fill="#27304a" fill-opacity="0.95" lengthAdjust="spacingAndGlyphs" textLength="52">52° 0.500' N</text>
<text x="30" y="587" font-family="Liberation Serif" font-size="10" fill="#27304a" fill-opacity="0.95" lengthAdjust="spacingAndGlyphs" textLength="52">52° 0.000' N</text>
<text x="1499" y="165" font-family="Liberation Serif" font-size="10" fill="#27304a" fill-opacity="0.95" lengthAdjust="spacingAndGlyphs" textLength="52">52° 0.500' N</text>
<text x="30" y="1009" font-family="Liberation Serif" font-size="10" fill="#27304a" fill-opacity="0.95" lengthAdjust="spacingAndGlyphs" textLength="54">51° 59.500' N</text>
<g opacity="0.6">
<circle cx="423.9" cy="567.5" r="365.0" fill="rgb(234,21,39)"/>
<path d="M422.8 566.2L214.5 866.5A365.0 365.0 0 0 1 92.0 719.4Z" fill="rgb(255,224,74)"/>
<path d="M422.8 566.2L93.1 721.8A365.0 365.0 0 0 1 64.0 628.4Z" fill="rgb(112,243,89)"/>
<path d="M422.8 566.2L64.4 630.9A365.0 365.0 0 0 1 109.1 382.8Z" fill="rgb(132,219,154)"/>
<path d="M422.8 566.2L107.8 385.0A365.0 365.0 0 0 1 167.6 307.6Z" fill="rgb(112,243,89)"/>
<path d="M422.8 566.2L165.8 309.4A365.0 365.0 0 0 1 329.4 214.9Z" fill="rgb(255,224,74)"/>
</g>
<circle cx="423.9" cy="567.5" r="365.0" fill="none" stroke="#000" stroke-width="1"/>
<circle cx="423.9" cy="567.5" r="182.5" fill="none" stroke="#000" stroke-width="1"/>
<circle cx="423.9" cy="567.5" r="91.2" fill="none" stroke="#000" stroke-width="1"/>
<circle cx="423.9" cy="567.5" r="45.6" fill="none" stroke="#000" stroke-width="1"/>
<text x="425" y="201.7" text-anchor="middle" font-size="10.6" fill="#000" textLength="68" lengthAdjust="spacingAndGlyphs">800 m - 4.0 kn</text>
<text x="425" y="384.2" text-anchor="middle" font-size="10.6" fill="#000" textLength="68" lengthAdjust="spacingAndGlyphs">400 m - 3.0 kn</text>
<text x="425" y="475.4" text-anchor="middle" font-size="10.6" fill="#000" textLength="68" lengthAdjust="spacingAndGlyphs">200 m - 2.0 kn</text>
<text x="425" y="521.1" text-anchor="middle" font-size="10.6" fill="#000" textLength="68" lengthAdjust="spacingAndGlyphs">100 m - 1.0 kn</text>
<g opacity="0.8"><path d="M42.6 103.5L36.6 117.5H48.6Z" fill="#e39478"/><path d="M42.6 108V156" stroke="#e8906c" stroke-width="1.3"/><path d="M36.5 138V126.5L48 137.5V126" stroke="#e39478" stroke-width="1" fill="none"/></g>
<path d="M1201 92C1212 112 1228 140 1245 176" stroke="#111" stroke-width="1.2" fill="none"/>
<path d="M1150.5 1116L1162 1100" stroke="#111" stroke-width="1.2" fill="none"/>
<path d="M430.0 560.0L519.5 576.4C531.0 578.6 541.4 583.8 543.5 589.7C539.5 594.4 527.9 595.7 516.4 593.6L426.9 577.1C423.6 576.5 421.4 573.4 422.0 570.1L423.0 564.8C423.6 561.6 426.7 559.4 430.0 560.0Z" fill="#6e6463" stroke="#000" stroke-width="1.0"/>
<path d="M157.0 146.6L205.3 219.0C212.3 229.5 216.1 241.4 213.3 247.3C206.8 247.6 197.3 239.4 190.3 229.0L142.0 156.6C139.6 152.9 140.6 147.9 144.2 145.5L145.9 144.4C149.6 141.9 154.6 142.9 157.0 146.6Z" fill="none" stroke="#000" stroke-width="1.0"/>
<path d="M186.2 536.6L225.2 542.8C228.7 543.4 231.9 545.2 232.5 547.4C231.3 549.3 227.7 550.1 224.1 549.5L185.1 543.3C183.5 543.1 182.3 541.5 182.6 539.9L182.7 539.1C183.0 537.5 184.5 536.4 186.2 536.6Z" fill="none" stroke="#000" stroke-width="1.0"/>
<path d="M483.1 578.1L830 639.3" stroke="#8f6ff5" stroke-width="1.15" fill="none"/>
<path d="M491 594.5L830 653.7" stroke="#9a68f0" stroke-width="1.1" stroke-dasharray="5 7" fill="none"/>
<path d="M179.5 196.1L805.3 1124" stroke="#9a68f0" stroke-width="1.1" stroke-dasharray="4.2 8" fill="none"/>
<path d="M1564.5 769.8L1577 770.8M1566 784L1571 785.2" stroke="#8f6ff5" stroke-width="1.1" fill="none"/>
<path d="M210.3 246.5L422.6 565.9" stroke="#000" stroke-width="1" stroke-dasharray="17 8" fill="none"/>
<path d="M212.6 246.8L400.9 526.6" stroke="#000" stroke-width="2" fill="none"/>
<path d="M391.6 522.6L400.9 526.6L401.6 516" stroke="#000" stroke-width="1.8" fill="none"/>
<path d="M219.2 545.9L491 594.5" stroke="#000" stroke-width="2.6" fill="none"/>
<path d="M480.7 587L491 594.5L478.4 598.2" stroke="#000" stroke-width="2.2" fill="none"/>
<path d="M417.5 577.6L422.6 566L428.7 576.2M538.4 599.6L543.5 588L550.5 599.6" stroke="#000" stroke-width="1.5" fill="none"/>
<path d="M475.8 578.1H490.40000000000003M483.1 570.8000000000001V585.4" stroke="#000" stroke-width="2" fill="none"/>
<path d="M171.79999999999998 195.9H186.4M179.1 188.6V203.20000000000002" stroke="#000" stroke-width="2" fill="none"/>
<path d="M214.79999999999998 544.3H223.6M219.2 539.9V548.6999999999999" stroke="#000" stroke-width="1.4" fill="none"/>
<text x="180.6" y="211.8" font-size="16.6" fill="#000" stroke="#000" stroke-width="0.45" textLength="112.5" lengthAdjust="spacingAndGlyphs">Second vessel</text>
<text x="208.5" y="559.7" font-size="16.6" fill="#000" stroke="#000" stroke-width="0.45" textLength="88.5" lengthAdjust="spacingAndGlyphs">First vessel</text>
<g fill="none"><rect x="1450" y="100.8" width="49.4" height="40.6" rx="3" fill="#fff" stroke="#111" stroke-width="1.2"/><rect x="1453.8" y="104.8" width="41.4" height="5.2" fill="#9dbaf2" stroke="#111" stroke-width="1"/><rect x="1453.8" y="114" width="41.4" height="14.6" fill="#9dbaf2" stroke="#111" stroke-width="1"/><rect x="1453.8" y="132.6" width="41.4" height="5.2" fill="#9dbaf2" stroke="#111" stroke-width="1"/></g>
<g><path d="M1519.5 100.8H1564a3 3 0 0 1 3 3V138.5a3 3 0 0 1-3 3H1519.5V137.5H1548.5V105H1519.5Z" fill="#fff" stroke="#111" stroke-width="1.2"/><rect x="1552.6" y="105" width="11" height="32.4" fill="#9dbaf2" stroke="#111" stroke-width="1"/></g>
</svg></div>
<div class="abs" style="left:1577px;top:90px;width:5px;height:1026px;background:#f0f0f0"></div>
<div class="abs" style="left:1577px;top:90px;width:1px;height:1026px;background:#fff"></div>
<div class="abs" style="left:1581px;top:90px;width:2px;height:1026px;background:#8c8c8c"></div>
<div class="abs" style="left:1583px;top:91px;width:336px;height:1025px;background:#000"></div>
<div class="abs" style="left:1919px;top:90px;width:2px;height:1026px;background:#fff"></div>
<div class="abs" style="left:1590px;top:100px;width:315px;height:231px;border:1px solid #848484;border-right-color:#fff;border-bottom-color:#fff"></div><div class="abs" style="left:1591px;top:101px;width:313px;height:229px;border:1px solid #fff;border-right-color:#8a8a8a;border-bottom-color:#8a8a8a"></div>
<span class="t" style="left:1595px;top:106px;font-size:11.6px;letter-spacing:-0.3px;color:#fff">Vessel</span>
<div class="abs" style="left:1595px;top:119.5px;width:305px;height:1.3px;background:#fff"></div>
<span class="t" style="left:1604px;top:153.5px;font-size:11.8px;color:#fff;letter-spacing:-0.28px">HDG:</span><span class="t" style="left:1660px;width:201px;text-align:center;top:145.6px;font-size:23px;font-weight:700;color:#fff">100.0°</span>
<span class="t" style="left:1604px;top:201.5px;font-size:11.8px;color:#fff;letter-spacing:-0.28px">ROT:</span><span class="t" style="left:1660px;width:201px;text-align:center;top:193.6px;font-size:23px;font-weight:700;color:#fff">0°/min</span>
<span class="t" style="left:1604px;top:249.5px;font-size:11.8px;color:#fff;letter-spacing:-0.28px">COG:</span><span class="t" style="left:1660px;width:201px;text-align:center;top:241.6px;font-size:23px;font-weight:700;color:#fff">000.0°</span>
<span class="t" style="left:1604px;top:297.5px;font-size:11.8px;color:#fff;letter-spacing:-0.28px">SOG:</span><span class="t" style="left:1660px;width:201px;text-align:center;top:289.6px;font-size:23px;font-weight:700;color:#fff">0 kn</span>
<div class="abs" style="left:1590px;top:354px;width:315px;height:209px;border:1px solid #848484;border-right-color:#fff;border-bottom-color:#fff"></div><div class="abs" style="left:1591px;top:355px;width:313px;height:207px;border:1px solid #fff;border-right-color:#8a8a8a;border-bottom-color:#8a8a8a"></div>
<span class="t" style="left:1604px;top:385.0px;font-size:11.8px;color:#fff;letter-spacing:-0.28px">HDG:</span><span class="t" style="left:1660px;width:201px;text-align:center;top:377.1px;font-size:23px;font-weight:700;color:#63e463">146°</span>
<span class="t" style="left:1604px;top:433.0px;font-size:11.8px;color:#fff;letter-spacing:-0.28px">ROT:</span><span class="t" style="left:1660px;width:201px;text-align:center;top:425.1px;font-size:23px;font-weight:700;color:#63e463">0°/min</span>
<span class="t" style="left:1604px;top:481.0px;font-size:11.8px;color:#fff;letter-spacing:-0.28px">COG:</span><span class="t" style="left:1660px;width:201px;text-align:center;top:473.1px;font-size:23px;font-weight:700;color:#63e463">146.0°</span>
<span class="t" style="left:1604px;top:529.0px;font-size:11.8px;color:#fff;letter-spacing:-0.28px">SOG:</span><span class="t" style="left:1660px;width:201px;text-align:center;top:521.1px;font-size:23px;font-weight:700;color:#63e463">4.0 kn</span>
<div class="abs" style="left:1590px;top:332px;width:315px;height:24px;background:#000;border:1px solid #a0a0a0;border-right-color:#fff;border-bottom-color:#fff"></div><div class="abs" style="left:1591px;top:333px;width:313px;height:22px;border:1px solid #696969;border-right-color:#e3e3e3;border-bottom-color:#e3e3e3"></div><span class="t" style="left:1594px;top:338px;font-size:12.8px;letter-spacing:-0.1px;color:#fff">Second vessel</span><div class="abs" style="left:1882px;top:334px;width:21px;height:20px;background:#f0f0f0;border:1px solid #fff;border-right-color:#696969;border-bottom-color:#696969"></div><div class="abs" style="left:1883px;top:335px;width:19px;height:18px;border:1px solid #f0f0f0;border-right-color:#a0a0a0;border-bottom-color:#a0a0a0"></div><svg class="abs" style="left:1887.500px;top:341.500px" width="10" height="6"><path d="M0.5 0.500H9.500L5 5.500Z" fill="#000"/></svg>
<div class="abs" style="left:1590px;top:565px;width:315px;height:231px;border:1px solid #848484;border-right-color:#fff;border-bottom-color:#fff"></div><div class="abs" style="left:1591px;top:566px;width:313px;height:229px;border:1px solid #fff;border-right-color:#8a8a8a;border-bottom-color:#8a8a8a"></div>
<span class="t" style="left:1595px;top:570px;font-size:11.6px;letter-spacing:-0.3px;color:#fff">Relative</span>
<div class="abs" style="left:1595px;top:583.5px;width:305px;height:1.3px;background:#fff"></div>
<span class="t" style="left:1606px;top:616.5px;font-size:11.8px;color:#fff;letter-spacing:-0.28px">BNG:</span><span class="t" style="left:1660px;width:201px;text-align:center;top:609.6px;font-size:23px;font-weight:700;color:#a274ea">326.8°</span>
<span class="t" style="left:1606px;top:664.5px;font-size:11.8px;color:#fff;letter-spacing:0.03px">Rel. BNG:</span><span class="t" style="left:1660px;width:201px;text-align:center;top:657.6px;font-size:23px;font-weight:700;color:#a274ea">-133.2°</span>
<span class="t" style="left:1606px;top:712.5px;font-size:11.8px;color:#fff;letter-spacing:0.39px">Range:</span><span class="t" style="left:1660px;width:201px;text-align:center;top:705.6px;font-size:23px;font-weight:700;color:#a274ea">840 m</span>
<span class="t" style="left:1606px;top:760.5px;font-size:11.8px;color:#fff;letter-spacing:0.31px">Rel. Speed</span><span class="t" style="left:1660px;width:201px;text-align:center;top:753.6px;font-size:23px;font-weight:700;color:#a274ea">4.0 kn</span>
<div class="abs" style="left:28px;top:993px;width:650px;height:122px;opacity:0.82;border-radius:8px;background:#f0f0f0;overflow:hidden;box-shadow:0 2px 10px 1px rgba(0,0,30,0.25)">
<div class="abs" style="left:0;top:0;width:650px;height:36px;background:#f3f3f3"></div>
<svg class="abs" style="left:10px;top:7px" width="18" height="22" viewBox="0 0 18 22"><path d="M0.5 2H4.5V5.5ZM17.5 2H13.5V5.5ZM0.5 8.5H4.5V12ZM17.5 8.5H13.5V12ZM0.5 15H4.5V18.5ZM17.5 15H13.5V18.5Z" fill="#1f3d3d"/><rect x="4.5" y="0.5" width="9" height="20" rx="1.5" fill="#25494a"/><path d="M6 20.5H12V22H6Z" fill="#1f3d3d"/><circle cx="9" cy="4.2" r="2.3" fill="#e83030"/><circle cx="9" cy="10.5" r="2.3" fill="#f0e020"/><circle cx="9" cy="16.8" r="2.3" fill="#30e040"/></svg>
<span class="t" style="left:35px;top:11.5px;font-size:15.4px;letter-spacing:-0.35px;color:#8f939c">Alarms</span>
<svg class="abs" style="left:490px;top:4px" width="150" height="28" viewBox="0 0 150 28" fill="none"><path d="M7 13.5H20" stroke="#8a8a8a"/><rect x="65.5" y="8.5" width="11" height="11" rx="1.5" stroke="#d0d0d0"/><path d="M124 8L136 20M136 8L124 20" stroke="#7a7a7a" stroke-width="1.1"/></svg>
<div class="abs" style="left:0px;top:37px;width:649px;height:47px;border:1px solid #8a8a8a;border-right-color:#fff;border-bottom-color:#fff"></div>
<div class="abs" style="left:1px;top:38px;width:647px;height:45px;border:1px solid #696969;border-right-color:#d8d8d8;border-bottom-color:#d8d8d8;background:#a0a0a0"></div>
<div class="abs" style="left:2px;top:39px;width:197px;height:21px;background:#ffffe1"></div>
<div class="abs" style="left:200px;top:39px;width:249px;height:21px;background:#6fee66"></div>
<div class="abs" style="left:450px;top:39px;width:85px;height:21px;background:#6fee66"></div>
<span class="t" style="left:6.5px;top:42.6px;font-size:14.6px;letter-spacing:-0.27px">Tandem Zone (FPSO)</span>
<span class="t" style="left:204.5px;top:42.6px;font-size:14.6px;letter-spacing:-0.16px">First vessel in safe zone</span>
<span class="t" style="left:454.5px;top:42.6px;font-size:14.6px;letter-spacing:-0.35px">00:01:23</span>
<div class="abs" style="left:536px;top:39px;width:111px;height:21px;background:#f0f0f0;border:1px solid #fff;border-right-color:#696969;border-bottom-color:#696969"></div>
<div class="abs" style="left:537px;top:40px;width:109px;height:19px;border:1px solid #f0f0f0;border-right-color:#a0a0a0;border-bottom-color:#a0a0a0"></div>
<span class="t" style="left:538px;width:108px;text-align:center;top:42.6px;font-size:14.6px;color:#858994">Snooze</span>
<div class="abs" style="left:2px;top:61px;width:197px;height:21px;background:#ffffe1"></div>
<div class="abs" style="left:200px;top:61px;width:249px;height:21px;background:#6fee66"></div>
<div class="abs" style="left:450px;top:61px;width:85px;height:21px;background:#6fee66"></div>
<span class="t" style="left:6.5px;top:64.6px;font-size:14.6px;letter-spacing:-0.2px">Tandem speed rings (FPSO)</span>
<span class="t" style="left:204.5px;top:64.6px;font-size:14.6px;letter-spacing:-0.16px"></span>
<span class="t" style="left:454.5px;top:64.6px;font-size:14.6px;letter-spacing:-0.15px">Since Start</span>
<div class="abs" style="left:536px;top:61px;width:111px;height:21px;background:#f0f0f0;border:1px solid #fff;border-right-color:#696969;border-bottom-color:#696969"></div>
<div class="abs" style="left:537px;top:62px;width:109px;height:19px;border:1px solid #f0f0f0;border-right-color:#a0a0a0;border-bottom-color:#a0a0a0"></div>
<span class="t" style="left:538px;width:108px;text-align:center;top:64.6px;font-size:14.6px;color:#858994">Snooze</span>
<div class="abs" style="left:3px;top:88px;width:27px;height:32px;background:#f0f0f0;border:1px solid #fff;border-right-color:#696969;border-bottom-color:#696969"></div><div class="abs" style="left:4px;top:89px;width:25px;height:30px;border:1px solid #f0f0f0;border-right-color:#a0a0a0;border-bottom-color:#a0a0a0"></div>
<div class="abs" style="left:37.6px;top:88px;width:27px;height:32px;background:#f0f0f0;border:1px solid #fff;border-right-color:#696969;border-bottom-color:#696969"></div><div class="abs" style="left:38.6px;top:89px;width:25px;height:30px;border:1px solid #f0f0f0;border-right-color:#a0a0a0;border-bottom-color:#a0a0a0"></div>
<div class="abs" style="left:72px;top:88px;width:27px;height:32px;background:#f4f4f4;border:1px solid #696969;border-right-color:#fff;border-bottom-color:#fff"></div>
<div class="abs" style="left:107.6px;top:88px;width:27px;height:32px;background:#f0f0f0;border:1px solid #fff;border-right-color:#696969;border-bottom-color:#696969"></div><div class="abs" style="left:108.6px;top:89px;width:25px;height:30px;border:1px solid #f0f0f0;border-right-color:#a0a0a0;border-bottom-color:#a0a0a0"></div>
<svg class="abs" style="left:5px;top:93px" width="24" height="22" viewBox="0 0 24 22"><path d="M1 8.5L3.5 7L11 1.5C13.5 4 13.5 17 11 20.5L3.5 14.5L1 13.5Z" fill="#f0ee60" stroke="#8a8a70" stroke-width="0.8"/><path d="M9.5 3.5C11.5 6 11.5 15 9.5 18.5" stroke="#333" stroke-width="1.6" fill="none"/><path d="M12.5 5V17" stroke="#333" stroke-width="1.2"/><path d="M15.5 7.5C14.4 9.5 14.4 12 15.5 14M17 10.8H18.6M20 7.5C21.2 9.5 21.2 12 20 14" stroke="#1a1a6a" stroke-width="0.9" fill="none"/></svg>
<svg class="abs" style="left:40px;top:92px" width="24" height="24" viewBox="0 0 24 24"><rect x="7.5" y="1.5" width="14.5" height="11" fill="#fff" stroke="#1c2ccc" stroke-width="1.6"/><rect x="7" y="1" width="15.5" height="2.6" fill="#1c2ccc"/><rect x="10" y="5.4" width="6.4" height="4.6" fill="#30d030"/><path d="M9.5 16L3.5 21" stroke="#1c2ccc" stroke-width="1.6"/><path d="M1 17V22.5H7Z" fill="#1c2ccc"/></svg>
<svg class="abs" style="left:74px;top:91px" width="24" height="25" viewBox="0 0 24 25"><rect width="24" height="25" fill="#c02838"/><path d="M24 0V25H0Z" fill="#28b038"/><path d="M2.5 3.5V10H6M8.2 3.5H11.2V10H8.2Z" stroke="#fff" stroke-width="1.5" fill="none"/><path d="M12.2 14.5H15.4V21.5H12.2ZM18 14.5V21.5M22 14.5L18.4 18L22 21.5" stroke="#111" stroke-width="1.5" fill="none"/></svg>
<svg class="abs" style="left:110px;top:91px" width="24" height="26" viewBox="0 0 24 26"><path d="M1.5 2H8.5L11.5 5V15H1.5Z" fill="#e4ecfa" stroke="#a8b8d8" stroke-width="0.8"/><path d="M11.5 10H18.5L21.5 13V23.500H11.5Z" fill="#dde8fa" stroke="#a8b8d8" stroke-width="0.8"/><path d="M11 1.5C16 1 19 4 19 7.5H21.5L17 12L12.5 7.5H15.2C15.2 5.5 13.5 4 11 4Z" fill="#3cc03c" stroke="#209020" stroke-width="0.6"/><path d="M10 24C5.500 24 3.500 21.500 3.500 18.500H1L5.500 13.800L10 18.500H7.200C7.200 20.200 8.200 21.500 10 21.500Z" fill="#4ccc4c" stroke="#209020" stroke-width="0.6"/></svg>
<svg class="abs" style="left:633px;top:105px" width="16" height="16" viewBox="0 0 16 16"><path d="M2 15L15 2M6 15L15 6M10 15L15 10" stroke="#fff" stroke-width="1.4"/><path d="M3 15L15 3M7 15L15 7M11 15L15 11" stroke="#a0a0a0" stroke-width="1.2"/></svg>
</div>
<div class="abs" style="left:827px;top:174px;width:737px;height:927px;background:#f0f0f0;border-radius:8px;box-shadow:0 4px 22px 4px rgba(0,0,30,0.30),0 0 0 1px rgba(90,100,130,0.35)"></div>
<div class="abs" style="left:827px;top:174px;width:737px;height:34px;background:#f3f3f3;border-radius:8px 8px 0 0"></div>
<svg class="abs" style="left:836px;top:182px" width="20" height="20" viewBox="0 0 20 20"><defs><linearGradient id="lg2" x1="0" y1="0" x2="0" y2="1"><stop offset="0" stop-color="#d87a6c"/><stop offset="0.55" stop-color="#bf2a16"/><stop offset="1" stop-color="#8c160a"/></linearGradient></defs><rect width="20" height="20" fill="url(#lg2)"/><path d="M4.1 16.1L7.2 9.9L6 5.2L10.3 6.8L16.9 3.1L13.4 9.5L15 14.1L10.3 12.8Z" fill="#fff"/><circle cx="10.3" cy="9.8" r="0.95" fill="#c0382a"/></svg>
<span class="t" style="left:861px;top:184.5px;font-size:15px;color:#8c8c8c">Mariner settings</span>
<svg class="abs" style="left:1400px;top:176px" width="160" height="32" viewBox="0 0 160 32" fill="none"><path d="M11 15.5H23" stroke="#909090"/><rect x="69.5" y="10.5" width="11" height="11" rx="1.5" stroke="#dcdcdc"/><path d="M128 10L139.5 21.5M139.5 10L128 21.5" stroke="#7a7a7a" stroke-width="1.1"/></svg>
<div class="abs" style="left:828px;top:211px;width:180px;height:853px;background:#f0f0f0;border:1px solid #a0a0a0;border-right-color:#fff;border-bottom-color:#fff"></div><div class="abs" style="left:829px;top:212px;width:178px;height:851px;border:1px solid #696969;border-right-color:#e3e3e3;border-bottom-color:#e3e3e3"></div>
<div class="abs" style="left:829px;top:213px;width:178px;height:24px;background:#f0f0f0;border:1px solid #fff;border-right-color:#696969;border-bottom-color:#696969"></div><div class="abs" style="left:830px;top:214px;width:176px;height:22px;border:1px solid #f0f0f0;border-right-color:#a0a0a0;border-bottom-color:#a0a0a0"></div><span class="t" style="left:829px;width:178px;text-align:center;top:218.5px;font-size:13.4px">General</span>
<div class="abs" style="left:829px;top:238px;width:178px;height:24px;background:#f0f0f0;border:1px solid #fff;border-right-color:#696969;border-bottom-color:#696969"></div><div class="abs" style="left:830px;top:239px;width:176px;height:22px;border:1px solid #f0f0f0;border-right-color:#a0a0a0;border-bottom-color:#a0a0a0"></div><span class="t" style="left:829px;width:178px;text-align:center;top:243.5px;font-size:13.4px">Presentation</span>
<div class="abs" style="left:829px;top:263px;width:178px;height:24px;background:#f0f0f0;border:1px solid #fff;border-right-color:#696969;border-bottom-color:#696969"></div><div class="abs" style="left:830px;top:264px;width:176px;height:22px;border:1px solid #f0f0f0;border-right-color:#a0a0a0;border-bottom-color:#a0a0a0"></div><span class="t" style="left:829px;width:178px;text-align:center;top:268.5px;font-size:13.4px">Navigation</span>
<div class="abs" style="left:829px;top:1038px;width:178px;height:1px;background:#7a7a7a"></div>
<div class="abs" style="left:829px;top:1039px;width:178px;height:25px;background:#f0f0f0;border:1px solid #fff;border-right-color:#696969;border-bottom-color:#696969"></div><div class="abs" style="left:830px;top:1040px;width:176px;height:23px;border:1px solid #f0f0f0;border-right-color:#a0a0a0;border-bottom-color:#a0a0a0"></div><span class="t" style="left:829px;width:178px;text-align:center;top:1045.0px;font-size:13.4px">Advanced Settings</span>
<div class="abs" style="left:833px;top:423px;width:170px;height:66px;border:1px solid #696969;border-right-color:#fff;border-bottom-color:#fff"></div>
<span class="t" style="left:830px;width:175px;text-align:center;top:328.5px;font-size:13.4px">Route</span>
<span class="t" style="left:830px;width:175px;text-align:center;top:395.5px;font-size:13.4px">CPA</span>
<span class="t" style="left:830px;width:175px;text-align:center;top:462.5px;font-size:13.4px">Mooring</span>
<span class="t" style="left:830px;width:175px;text-align:center;top:529.5px;font-size:13.4px">Target Settings</span>
<svg class="abs" style="left:901px;top:290px" width="34" height="36" viewBox="0 0 34 36"><path d="M17.5 6.1C11 6.5 7 10 5.9 17.5C6.5 23 9 23.6 14 23.6L20 23.8C24 24 26 26 27.5 29.4" stroke="#e6b81e" stroke-width="1.9" fill="none"/><circle cx="17.5" cy="6.1" r="3.9" fill="#780808"/><circle cx="5.9" cy="17.5" r="3.9" fill="#780808"/><circle cx="27.5" cy="29.4" r="3.9" fill="#780808"/><circle cx="16.6" cy="5.2" r="1.3" fill="#a02020"/><circle cx="5" cy="16.6" r="1.3" fill="#a02020"/><circle cx="26.6" cy="28.5" r="1.3" fill="#a02020"/></svg>
<svg class="abs" style="left:900px;top:356px" width="36" height="38" viewBox="0 0 36 38"><path d="M2.9 16.9L16.9 13.7M16.9 23.7L29.6 16.7" stroke="#222" stroke-width="1.5"/><path d="M13.4 15.3L18.5 22.5" stroke="#e81818" stroke-width="1.8"/><path d="M28.5 3.3L33.1 13L16.9 14.2Z" fill="#2fb52f"/><path d="M28.5 3.3L30.6 9.5L16.9 14.2Z" fill="#5fd85f"/><path d="M33.1 13L30.6 9.5L16.9 14.2Z" fill="#1c961c"/><path d="M2.5 24.6L7.6 34.6L18.5 23.7Z" fill="#2fb52f"/><path d="M2.5 24.6L5.2 28.4L18.5 23.7Z" fill="#5fd85f"/><path d="M7.6 34.6L5.2 28.4L18.5 23.7Z" fill="#1c961c"/></svg>
<svg class="abs" style="left:900px;top:426px" width="36" height="34" viewBox="0 0 36 34"><g transform="translate(2.2 0.8) scale(0.96)"><rect x="11.2" y="0.5" width="2" height="5" fill="#c83020"/><rect x="11" y="0" width="2.4" height="1" fill="#555"/><path d="M8.5 6H16.5L17.8 11H7.5Z" fill="#e04a30"/><path d="M9.5 7.5H12.2V10H9Z" fill="#cfe8f8"/><path d="M13.2 7.5H15.6V10H13.2Z" fill="#cfe8f8"/><path d="M0.5 13C6 9.8 18 9 25 11C24 17 19 20.500 12 20.500C6 20.200 1.500 17.500 0.5 13Z" fill="#e8502c"/><path d="M3 13.800C8 11.600 17 11.200 22 12.500C20.500 16 16.500 18 11.500 18C7.500 17.800 4.500 16.500 3 13.800Z" fill="#f4b63e"/><path d="M0.6 13.500C3 19.500 9 21.800 14.500 21C19.500 20 23.500 17 25 11C24.500 19 18 23.600 11 23C5 22.400 1.200 18.500 0.6 13.500Z" fill="#8c8c8c"/></g><path d="M19.2 18.7L25 25" stroke="#111" stroke-width="1.7"/><rect x="22" y="24.6" width="11" height="6" fill="#fff" stroke="#111" stroke-width="1"/><path d="M24 26.8H30.5M24 28.6H28" stroke="#555" stroke-width="0.8"/></svg>
<svg class="abs" style="left:901px;top:492px" width="36" height="36" viewBox="0 0 36 36"><path d="M10.5 2.4L1.9 17H19.8Z" fill="#2fae2f"/><path d="M10.5 2.4L10.5 11L19.8 17Z" fill="#189018"/><path d="M10.5 2.4L10.5 11L1.9 17Z" fill="#5fd85f"/><path d="M10.500 11L1.900 17H19.800Z" fill="#2aa82a"/><path d="M21.2 13.5L12.9 28.1H26.3Z" fill="#2fae2f"/><path d="M21.200 13.500L21.200 22L26.300 28.100Z" fill="#189018"/><path d="M21.200 13.500L21.200 22L12.900 28.100Z" fill="#5fd85f"/><rect x="20.8" y="21.8" width="8.4" height="7.6" fill="#f4f4f4" stroke="#b0b0b0" stroke-width="0.8"/><path d="M21.6 24.6L24.4 28L29.6 19.6" stroke="#d01818" stroke-width="1.9" fill="none"/></svg>
<div class="abs" style="left:1015px;top:211px;width:547px;height:854px;background:#f0f0f0;border:1px solid #a0a0a0;border-right-color:#fff;border-bottom-color:#fff"></div><div class="abs" style="left:1016px;top:212px;width:545px;height:852px;border:1px solid #696969;border-right-color:#e3e3e3;border-bottom-color:#e3e3e3"></div>
<div class="abs" style="left:1024px;top:231px;width:531px;height:173px;border:1px solid #fff"></div><div class="abs" style="left:1023px;top:230px;width:531px;height:173px;border:1px solid #a0a0a0"></div><span class="t" style="left:1031px;top:224.5px;font-size:12.9px;background:#f0f0f0;padding:0 3px;width:75px">Presentation</span>
<div class="abs" style="left:1037px;top:245px;width:503px;height:142px;background:#f0f0f0;border:1px solid #a0a0a0;border-right-color:#fff;border-bottom-color:#fff"></div><div class="abs" style="left:1038px;top:246px;width:501px;height:140px;border:1px solid #696969;border-right-color:#e3e3e3;border-bottom-color:#e3e3e3"></div>
<div class="abs" style="left:1039px;top:247px;width:499px;height:132px;background:#ffffe1"></div>
<div class="abs" style="left:1039px;top:268px;width:499px;height:1px;background:#a0a0a0"></div>
<span class="t" style="left:1043px;top:249.5px;font-size:15px;letter-spacing:-0.032px">Draw mooring distances</span>
<div class="abs" style="left:1376px;top:249px;width:17px;height:17px;background:#fff;border:1px solid #a0a0a0;border-right-color:#fff;border-bottom-color:#fff"></div><div class="abs" style="left:1377px;top:250px;width:15px;height:15px;border:1px solid #696969;border-right-color:#e3e3e3;border-bottom-color:#e3e3e3"></div>
<div class="abs" style="left:1039px;top:290px;width:499px;height:1px;background:#a0a0a0"></div>
<span class="t" style="left:1043px;top:271.5px;font-size:15px;letter-spacing:-0.216px">Draw locks</span>
<div class="abs" style="left:1376px;top:271px;width:17px;height:17px;background:#fff;border:1px solid #a0a0a0;border-right-color:#fff;border-bottom-color:#fff"></div><div class="abs" style="left:1377px;top:272px;width:15px;height:15px;border:1px solid #696969;border-right-color:#e3e3e3;border-bottom-color:#e3e3e3"></div>
<div class="abs" style="left:1039px;top:312px;width:499px;height:1px;background:#a0a0a0"></div>
<span class="t" style="left:1043px;top:293.5px;font-size:15px;letter-spacing:-0.229px">Use secondary vessels for mooring</span>
<div class="abs" style="left:1376px;top:293px;width:17px;height:17px;background:#fff;border:1px solid #a0a0a0;border-right-color:#fff;border-bottom-color:#fff"></div><div class="abs" style="left:1377px;top:294px;width:15px;height:15px;border:1px solid #696969;border-right-color:#e3e3e3;border-bottom-color:#e3e3e3"></div>
<div class="abs" style="left:1039px;top:334px;width:499px;height:1px;background:#a0a0a0"></div>
<span class="t" style="left:1043px;top:315.5px;font-size:15px;letter-spacing:-0.11px">Show approach speed in labels</span>
<div class="abs" style="left:1376px;top:315px;width:17px;height:17px;background:#fff;border:1px solid #a0a0a0;border-right-color:#fff;border-bottom-color:#fff"></div><div class="abs" style="left:1377px;top:316px;width:15px;height:15px;border:1px solid #696969;border-right-color:#e3e3e3;border-bottom-color:#e3e3e3"></div><svg class="abs" style="left:1379.4px;top:318.2px" width="10" height="10" viewBox="0 0 10 10"><path d="M0.6 3.2L3.500 6.200L9.200 0.300V3.600L3.500 9.700L0.600 6.600Z" fill="#000"/></svg>
<div class="abs" style="left:1039px;top:356px;width:499px;height:1px;background:#a0a0a0"></div>
<span class="t" style="left:1043px;top:337.5px;font-size:15px;letter-spacing:0.041px">Draw forward side mooring distances from:</span>
<div class="abs" style="left:1374px;top:335px;width:164px;height:21px;background:#fff"></div>
<span class="t" style="left:1378px;top:337.5px;font-size:15px;letter-spacing:-0.15px">Shoulders</span>
<div class="abs" style="left:1516px;top:335px;width:21px;height:20px;background:#f0f0f0;border:1px solid #fff;border-right-color:#696969;border-bottom-color:#696969"></div><div class="abs" style="left:1517px;top:336px;width:19px;height:18px;border:1px solid #f0f0f0;border-right-color:#a0a0a0;border-bottom-color:#a0a0a0"></div><svg class="abs" style="left:1522px;top:342.5px" width="9" height="5"><path d="M0 0H9L4.5 5Z" fill="#000"/></svg>
<div class="abs" style="left:1039px;top:378px;width:499px;height:1px;background:#a0a0a0"></div>
<span class="t" style="left:1043px;top:359.5px;font-size:15px;letter-spacing:0.028px">Draw aft side mooring distances from:</span>
<div class="abs" style="left:1374px;top:357px;width:164px;height:21px;background:#fff"></div>
<span class="t" style="left:1378px;top:359.5px;font-size:15px;letter-spacing:-0.15px">Shoulders</span>
<div class="abs" style="left:1516px;top:357px;width:21px;height:20px;background:#f0f0f0;border:1px solid #fff;border-right-color:#696969;border-bottom-color:#696969"></div><div class="abs" style="left:1517px;top:358px;width:19px;height:18px;border:1px solid #f0f0f0;border-right-color:#a0a0a0;border-bottom-color:#a0a0a0"></div><svg class="abs" style="left:1522px;top:364.5px" width="9" height="5"><path d="M0 0H9L4.5 5Z" fill="#000"/></svg>
<div class="abs" style="left:1373px;top:247px;width:1px;height:132px;background:#a0a0a0"></div>
<div class="abs" style="left:1538px;top:247px;width:1px;height:132px;background:#a0a0a0"></div>
<div class="abs" style="left:1024px;top:430px;width:531px;height:86px;border:1px solid #fff"></div><div class="abs" style="left:1023px;top:429px;width:531px;height:86px;border:1px solid #a0a0a0"></div><span class="t" style="left:1031px;top:423.5px;font-size:12.9px;background:#f0f0f0;padding:0 3px;width:50px">Settings</span>
<div class="abs" style="left:1037px;top:445px;width:503px;height:54px;background:#f0f0f0;border:1px solid #a0a0a0;border-right-color:#fff;border-bottom-color:#fff"></div><div class="abs" style="left:1038px;top:446px;width:501px;height:52px;border:1px solid #696969;border-right-color:#e3e3e3;border-bottom-color:#e3e3e3"></div>
<div class="abs" style="left:1039px;top:447px;width:499px;height:44px;background:#ffffe1"></div>
<div class="abs" style="left:1039px;top:468px;width:499px;height:1px;background:#a0a0a0"></div>
<span class="t" style="left:1043px;top:449.5px;font-size:15px;letter-spacing:-0.035px">Filter length for approach speed (s)</span>
<div class="abs" style="left:1374px;top:447px;width:164px;height:21px;background:#fff"></div>
<span class="t" style="left:1378px;top:449.5px;font-size:15px;letter-spacing:-0.15px">5</span>
<div class="abs" style="left:1039px;top:490px;width:499px;height:1px;background:#a0a0a0"></div>
<span class="t" style="left:1043px;top:471.5px;font-size:15px;letter-spacing:-0.134px">Only select locks on selected route</span>
<div class="abs" style="left:1376px;top:471px;width:17px;height:17px;background:#fff;border:1px solid #a0a0a0;border-right-color:#fff;border-bottom-color:#fff"></div><div class="abs" style="left:1377px;top:472px;width:15px;height:15px;border:1px solid #696969;border-right-color:#e3e3e3;border-bottom-color:#e3e3e3"></div>
<div class="abs" style="left:1373px;top:447px;width:1px;height:44px;background:#a0a0a0"></div>
<div class="abs" style="left:1538px;top:447px;width:1px;height:44px;background:#a0a0a0"></div>
<div class="abs" style="left:1017px;top:530px;width:543px;height:532px;overflow:hidden">
</div>
<div class="abs" style="left:1024px;top:542px;width:538px;height:513px;border:1px solid #fff"></div><div class="abs" style="left:1023px;top:541px;width:538px;height:513px;border:1px solid #a0a0a0"></div><span class="t" style="left:1031px;top:535.5px;font-size:12.9px;background:#f0f0f0;padding:0 3px;width:80px">Tandem Zone</span>
<div class="abs" style="left:1036.5px;top:558px;width:510px;height:22.6px;overflow:hidden;font-size:13.1px;line-height:16px;white-space:pre">The angles are defined in clockwise order, relative in regards to the heading of the
target vessel.</div>
<div class="abs" style="left:1037px;top:589px;width:503px;height:274px;background:#f0f0f0;border:1px solid #a0a0a0;border-right-color:#fff;border-bottom-color:#fff"></div><div class="abs" style="left:1038px;top:590px;width:501px;height:272px;border:1px solid #696969;border-right-color:#e3e3e3;border-bottom-color:#e3e3e3"></div>
<div class="abs" style="left:1039px;top:591px;width:499px;height:264px;background:#ffffe1"></div>
<div class="abs" style="left:1039px;top:612px;width:499px;height:1px;background:#a0a0a0"></div>
<span class="t" style="left:1043px;top:593.5px;font-size:15px;letter-spacing:0.037px">Show tandem mooring overlay</span>
<div class="abs" style="left:1376px;top:593px;width:17px;height:17px;background:#fff;border:1px solid #a0a0a0;border-right-color:#fff;border-bottom-color:#fff"></div><div class="abs" style="left:1377px;top:594px;width:15px;height:15px;border:1px solid #696969;border-right-color:#e3e3e3;border-bottom-color:#e3e3e3"></div><svg class="abs" style="left:1379.4px;top:596.2px" width="10" height="10" viewBox="0 0 10 10"><path d="M0.6 3.2L3.500 6.200L9.200 0.300V3.600L3.500 9.700L0.600 6.600Z" fill="#000"/></svg>
<div class="abs" style="left:1039px;top:634px;width:499px;height:1px;background:#a0a0a0"></div>
<span class="t" style="left:1043px;top:615.5px;font-size:15px;letter-spacing:-0.197px">Primary vessel is the target</span>
<div class="abs" style="left:1376px;top:615px;width:17px;height:17px;background:#fff;border:1px solid #a0a0a0;border-right-color:#fff;border-bottom-color:#fff"></div><div class="abs" style="left:1377px;top:616px;width:15px;height:15px;border:1px solid #696969;border-right-color:#e3e3e3;border-bottom-color:#e3e3e3"></div><svg class="abs" style="left:1379.4px;top:618.2px" width="10" height="10" viewBox="0 0 10 10"><path d="M0.6 3.2L3.500 6.200L9.200 0.300V3.600L3.500 9.700L0.600 6.600Z" fill="#000"/></svg>
<div class="abs" style="left:1039px;top:656px;width:499px;height:1px;background:#a0a0a0"></div>
<span class="t" style="left:1043px;top:637.5px;font-size:15px;letter-spacing:0.085px">Minimum warning angle</span>
<div class="abs" style="left:1374px;top:635px;width:164px;height:21px;background:#fff"></div>
<span class="t" style="left:1378px;top:637.5px;font-size:15px;letter-spacing:-0.15px">115.0 °</span>
<div class="abs" style="left:1520px;top:635px;width:16px;height:10px;background:#f0f0f0;border:1px solid #fff;border-right:1px solid #808080;border-bottom:1px solid #808080"></div><div class="abs" style="left:1521px;top:636px;width:14px;height:8px;border-right:1px solid #b8b8b8;border-bottom:1px solid #b8b8b8"></div><svg class="abs" style="left:1525px;top:638.5px" width="5" height="3"><path d="M0 3L2.5 0L5 3Z" fill="#000"/></svg><div class="abs" style="left:1520px;top:645px;width:16px;height:11px;background:#f0f0f0;border:1px solid #fff;border-right:1px solid #808080;border-bottom:1px solid #808080"></div><div class="abs" style="left:1521px;top:646px;width:14px;height:9px;border-right:1px solid #b8b8b8;border-bottom:1px solid #b8b8b8"></div><svg class="abs" style="left:1525.5px;top:649px" width="5" height="3"><path d="M0 0L2.5 3L5 0Z" fill="#000"/></svg>
<div class="abs" style="left:1039px;top:678px;width:499px;height:1px;background:#a0a0a0"></div>
<span class="t" style="left:1043px;top:659.5px;font-size:15px;letter-spacing:0.133px">Minimum pre-warning angle</span>
<div class="abs" style="left:1374px;top:657px;width:164px;height:21px;background:#fff"></div>
<span class="t" style="left:1378px;top:659.5px;font-size:15px;letter-spacing:-0.15px">145.0 °</span>
<div class="abs" style="left:1520px;top:657px;width:16px;height:10px;background:#f0f0f0;border:1px solid #fff;border-right:1px solid #808080;border-bottom:1px solid #808080"></div><div class="abs" style="left:1521px;top:658px;width:14px;height:8px;border-right:1px solid #b8b8b8;border-bottom:1px solid #b8b8b8"></div><svg class="abs" style="left:1525px;top:660.5px" width="5" height="3"><path d="M0 3L2.5 0L5 3Z" fill="#000"/></svg><div class="abs" style="left:1520px;top:667px;width:16px;height:11px;background:#f0f0f0;border:1px solid #fff;border-right:1px solid #808080;border-bottom:1px solid #808080"></div><div class="abs" style="left:1521px;top:668px;width:14px;height:9px;border-right:1px solid #b8b8b8;border-bottom:1px solid #b8b8b8"></div><svg class="abs" style="left:1525.5px;top:671px" width="5" height="3"><path d="M0 0L2.5 3L5 0Z" fill="#000"/></svg>
<div class="abs" style="left:1039px;top:700px;width:499px;height:1px;background:#a0a0a0"></div>
<span class="t" style="left:1043px;top:681.5px;font-size:15px;letter-spacing:0.009px">Minimum safe angle</span>
<div class="abs" style="left:1374px;top:679px;width:164px;height:21px;background:#fff"></div>
<span class="t" style="left:1378px;top:681.5px;font-size:15px;letter-spacing:-0.15px">160.0 °</span>
<div class="abs" style="left:1520px;top:679px;width:16px;height:10px;background:#f0f0f0;border:1px solid #fff;border-right:1px solid #808080;border-bottom:1px solid #808080"></div><div class="abs" style="left:1521px;top:680px;width:14px;height:8px;border-right:1px solid #b8b8b8;border-bottom:1px solid #b8b8b8"></div><svg class="abs" style="left:1525px;top:682.5px" width="5" height="3"><path d="M0 3L2.5 0L5 3Z" fill="#000"/></svg><div class="abs" style="left:1520px;top:689px;width:16px;height:11px;background:#f0f0f0;border:1px solid #fff;border-right:1px solid #808080;border-bottom:1px solid #808080"></div><div class="abs" style="left:1521px;top:690px;width:14px;height:9px;border-right:1px solid #b8b8b8;border-bottom:1px solid #b8b8b8"></div><svg class="abs" style="left:1525.5px;top:693px" width="5" height="3"><path d="M0 0L2.5 3L5 0Z" fill="#000"/></svg>
<div class="abs" style="left:1039px;top:722px;width:499px;height:1px;background:#a0a0a0"></div>
<span class="t" style="left:1043px;top:703.5px;font-size:15px;letter-spacing:-0.056px">Maximum safe angle</span>
<div class="abs" style="left:1374px;top:701px;width:164px;height:21px;background:#fff"></div>
<span class="t" style="left:1378px;top:703.5px;font-size:15px;letter-spacing:-0.15px">200.0 °</span>
<div class="abs" style="left:1520px;top:701px;width:16px;height:10px;background:#f0f0f0;border:1px solid #fff;border-right:1px solid #808080;border-bottom:1px solid #808080"></div><div class="abs" style="left:1521px;top:702px;width:14px;height:8px;border-right:1px solid #b8b8b8;border-bottom:1px solid #b8b8b8"></div><svg class="abs" style="left:1525px;top:704.5px" width="5" height="3"><path d="M0 3L2.5 0L5 3Z" fill="#000"/></svg><div class="abs" style="left:1520px;top:711px;width:16px;height:11px;background:#f0f0f0;border:1px solid #fff;border-right:1px solid #808080;border-bottom:1px solid #808080"></div><div class="abs" style="left:1521px;top:712px;width:14px;height:9px;border-right:1px solid #b8b8b8;border-bottom:1px solid #b8b8b8"></div><svg class="abs" style="left:1525.5px;top:715px" width="5" height="3"><path d="M0 0L2.5 3L5 0Z" fill="#000"/></svg>
<div class="abs" style="left:1039px;top:744px;width:499px;height:1px;background:#a0a0a0"></div>
<span class="t" style="left:1043px;top:725.5px;font-size:15px;letter-spacing:0.086px">Maximum pre-warning angle</span>
<div class="abs" style="left:1374px;top:723px;width:164px;height:21px;background:#fff"></div>
<span class="t" style="left:1378px;top:725.5px;font-size:15px;letter-spacing:-0.15px">215.0 °</span>
<div class="abs" style="left:1520px;top:723px;width:16px;height:10px;background:#f0f0f0;border:1px solid #fff;border-right:1px solid #808080;border-bottom:1px solid #808080"></div><div class="abs" style="left:1521px;top:724px;width:14px;height:8px;border-right:1px solid #b8b8b8;border-bottom:1px solid #b8b8b8"></div><svg class="abs" style="left:1525px;top:726.5px" width="5" height="3"><path d="M0 3L2.5 0L5 3Z" fill="#000"/></svg><div class="abs" style="left:1520px;top:733px;width:16px;height:11px;background:#f0f0f0;border:1px solid #fff;border-right:1px solid #808080;border-bottom:1px solid #808080"></div><div class="abs" style="left:1521px;top:734px;width:14px;height:9px;border-right:1px solid #b8b8b8;border-bottom:1px solid #b8b8b8"></div><svg class="abs" style="left:1525.5px;top:737px" width="5" height="3"><path d="M0 0L2.5 3L5 0Z" fill="#000"/></svg>
<div class="abs" style="left:1039px;top:766px;width:499px;height:1px;background:#a0a0a0"></div>
<span class="t" style="left:1043px;top:747.5px;font-size:15px;letter-spacing:0.03px">Maximum warning angle</span>
<div class="abs" style="left:1374px;top:745px;width:164px;height:21px;background:#fff"></div>
<span class="t" style="left:1378px;top:747.5px;font-size:15px;letter-spacing:-0.15px">245.0 °</span>
<div class="abs" style="left:1520px;top:745px;width:16px;height:10px;background:#f0f0f0;border:1px solid #fff;border-right:1px solid #808080;border-bottom:1px solid #808080"></div><div class="abs" style="left:1521px;top:746px;width:14px;height:8px;border-right:1px solid #b8b8b8;border-bottom:1px solid #b8b8b8"></div><svg class="abs" style="left:1525px;top:748.5px" width="5" height="3"><path d="M0 3L2.5 0L5 3Z" fill="#000"/></svg><div class="abs" style="left:1520px;top:755px;width:16px;height:11px;background:#f0f0f0;border:1px solid #fff;border-right:1px solid #808080;border-bottom:1px solid #808080"></div><div class="abs" style="left:1521px;top:756px;width:14px;height:9px;border-right:1px solid #b8b8b8;border-bottom:1px solid #b8b8b8"></div><svg class="abs" style="left:1525.5px;top:759px" width="5" height="3"><path d="M0 0L2.5 3L5 0Z" fill="#000"/></svg>
<div class="abs" style="left:1039px;top:788px;width:499px;height:1px;background:#a0a0a0"></div>
<span class="t" style="left:1043px;top:769.5px;font-size:15px;letter-spacing:-0.038px">Maximum radius</span>
<div class="abs" style="left:1374px;top:767px;width:164px;height:21px;background:#fff"></div>
<span class="t" style="left:1378px;top:769.5px;font-size:15px;letter-spacing:-0.15px">800 m</span>
<div class="abs" style="left:1520px;top:767px;width:16px;height:10px;background:#f0f0f0;border:1px solid #fff;border-right:1px solid #808080;border-bottom:1px solid #808080"></div><div class="abs" style="left:1521px;top:768px;width:14px;height:8px;border-right:1px solid #b8b8b8;border-bottom:1px solid #b8b8b8"></div><svg class="abs" style="left:1525px;top:770.5px" width="5" height="3"><path d="M0 3L2.5 0L5 3Z" fill="#000"/></svg><div class="abs" style="left:1520px;top:777px;width:16px;height:11px;background:#f0f0f0;border:1px solid #fff;border-right:1px solid #808080;border-bottom:1px solid #808080"></div><div class="abs" style="left:1521px;top:778px;width:14px;height:9px;border-right:1px solid #b8b8b8;border-bottom:1px solid #b8b8b8"></div><svg class="abs" style="left:1525.5px;top:781px" width="5" height="3"><path d="M0 0L2.5 3L5 0Z" fill="#000"/></svg>
<div class="abs" style="left:1039px;top:810px;width:499px;height:1px;background:#a0a0a0"></div>
<span class="t" style="left:1043px;top:791.5px;font-size:15px;letter-spacing:-0.236px">Ring style</span>
<div class="abs" style="left:1374px;top:789px;width:164px;height:21px;background:#fff"></div>
<span class="t" style="left:1378px;top:791.5px;font-size:15px;letter-spacing:-0.15px">Solid line</span>
<div class="abs" style="left:1516px;top:789px;width:21px;height:20px;background:#f0f0f0;border:1px solid #fff;border-right-color:#696969;border-bottom-color:#696969"></div><div class="abs" style="left:1517px;top:790px;width:19px;height:18px;border:1px solid #f0f0f0;border-right-color:#a0a0a0;border-bottom-color:#a0a0a0"></div><svg class="abs" style="left:1522px;top:796.5px" width="9" height="5"><path d="M0 0H9L4.5 5Z" fill="#000"/></svg>
<div class="abs" style="left:1039px;top:832px;width:499px;height:1px;background:#a0a0a0"></div>
<span class="t" style="left:1043px;top:813.5px;font-size:15px;letter-spacing:-0.179px">Show max speed on rings</span>
<div class="abs" style="left:1376px;top:813px;width:17px;height:17px;background:#fff;border:1px solid #a0a0a0;border-right-color:#fff;border-bottom-color:#fff"></div><div class="abs" style="left:1377px;top:814px;width:15px;height:15px;border:1px solid #696969;border-right-color:#e3e3e3;border-bottom-color:#e3e3e3"></div><svg class="abs" style="left:1379.4px;top:816.2px" width="10" height="10" viewBox="0 0 10 10"><path d="M0.6 3.2L3.500 6.200L9.200 0.300V3.600L3.500 9.700L0.600 6.600Z" fill="#000"/></svg>
<div class="abs" style="left:1039px;top:854px;width:499px;height:1px;background:#a0a0a0"></div>
<span class="t" style="left:1043px;top:835.5px;font-size:15px;letter-spacing:-0.112px">Ring count</span>
<div class="abs" style="left:1374px;top:833px;width:164px;height:21px;background:#fff"></div>
<span class="t" style="left:1378px;top:835.5px;font-size:15px;letter-spacing:-0.15px">5</span>
<div class="abs" style="left:1520px;top:833px;width:16px;height:10px;background:#f0f0f0;border:1px solid #fff;border-right:1px solid #808080;border-bottom:1px solid #808080"></div><div class="abs" style="left:1521px;top:834px;width:14px;height:8px;border-right:1px solid #b8b8b8;border-bottom:1px solid #b8b8b8"></div><svg class="abs" style="left:1525px;top:836.5px" width="5" height="3"><path d="M0 3L2.5 0L5 3Z" fill="#000"/></svg><div class="abs" style="left:1520px;top:843px;width:16px;height:11px;background:#f0f0f0;border:1px solid #fff;border-right:1px solid #808080;border-bottom:1px solid #808080"></div><div class="abs" style="left:1521px;top:844px;width:14px;height:9px;border-right:1px solid #b8b8b8;border-bottom:1px solid #b8b8b8"></div><svg class="abs" style="left:1525.5px;top:847px" width="5" height="3"><path d="M0 0L2.5 3L5 0Z" fill="#000"/></svg>
<div class="abs" style="left:1373px;top:591px;width:1px;height:264px;background:#a0a0a0"></div>
<div class="abs" style="left:1538px;top:591px;width:1px;height:264px;background:#a0a0a0"></div>
<div class="abs" style="left:1038px;top:878px;width:502px;height:160px;background:#f0f0f0;border:1px solid #a0a0a0;border-right-color:#fff;border-bottom-color:#fff"></div><div class="abs" style="left:1039px;top:879px;width:500px;height:158px;border:1px solid #696969;border-right-color:#e3e3e3;border-bottom-color:#e3e3e3"></div>
<div class="abs" style="left:1040px;top:880px;width:28px;height:20px;background:#f0f0f0;border-right:1px solid #a0a0a0;border-bottom:1px solid #a0a0a0"></div>
<div class="abs" style="left:1069px;top:880px;width:313px;height:20px;background:#eff4fb;border-right:1px solid #696969;border-bottom:1px solid #a0a0a0"></div>
<div class="abs" style="left:1383px;top:880px;width:155px;height:20px;background:#eff4fb;border-right:1px solid #a0a0a0;border-bottom:1px solid #a0a0a0"></div>
<span class="t" style="left:1074px;top:882.5px;font-size:15px">Distance</span>
<span class="t" style="left:1388px;top:882.5px;font-size:15px">Maximum speed</span>
<div class="abs" style="left:1040px;top:900px;width:28px;height:22px;background:#eff4fb;border-right:1px solid #a0a0a0;border-bottom:1px solid #a0a0a0"></div>
<span class="t" style="left:1044px;top:905px;font-size:15px">1</span>
<div class="abs" style="left:1069px;top:901px;width:313px;height:21px;background:#fff;border-bottom:1px solid #a0a0a0"></div>
<div class="abs" style="left:1383px;top:901px;width:155px;height:21px;background:#fff;border-bottom:1px solid #a0a0a0;border-right:1px solid #a0a0a0"></div>
<div class="abs" style="left:1382px;top:900px;width:1px;height:22px;background:#a0a0a0"></div>
<span class="t" style="left:1072px;top:903.5px;font-size:15px">100 m</span>
<span class="t" style="left:1386px;top:903.5px;font-size:15px">1.0 kn</span>
<div class="abs" style="left:1365px;top:901px;width:16px;height:10px;background:#f0f0f0;border:1px solid #fff;border-right:1px solid #808080;border-bottom:1px solid #808080"></div><div class="abs" style="left:1366px;top:902px;width:14px;height:8px;border-right:1px solid #b8b8b8;border-bottom:1px solid #b8b8b8"></div><svg class="abs" style="left:1370px;top:904.5px" width="5" height="3"><path d="M0 3L2.5 0L5 3Z" fill="#000"/></svg><div class="abs" style="left:1365px;top:911px;width:16px;height:11px;background:#f0f0f0;border:1px solid #fff;border-right:1px solid #808080;border-bottom:1px solid #808080"></div><div class="abs" style="left:1366px;top:912px;width:14px;height:9px;border-right:1px solid #b8b8b8;border-bottom:1px solid #b8b8b8"></div><svg class="abs" style="left:1370.5px;top:915px" width="5" height="3"><path d="M0 0L2.5 3L5 0Z" fill="#000"/></svg>
<div class="abs" style="left:1521px;top:901px;width:16px;height:10px;background:#f0f0f0;border:1px solid #fff;border-right:1px solid #808080;border-bottom:1px solid #808080"></div><div class="abs" style="left:1522px;top:902px;width:14px;height:8px;border-right:1px solid #b8b8b8;border-bottom:1px solid #b8b8b8"></div><svg class="abs" style="left:1526px;top:904.5px" width="5" height="3"><path d="M0 3L2.5 0L5 3Z" fill="#000"/></svg><div class="abs" style="left:1521px;top:911px;width:16px;height:11px;background:#f0f0f0;border:1px solid #fff;border-right:1px solid #808080;border-bottom:1px solid #808080"></div><div class="abs" style="left:1522px;top:912px;width:14px;height:9px;border-right:1px solid #b8b8b8;border-bottom:1px solid #b8b8b8"></div><svg class="abs" style="left:1526.5px;top:915px" width="5" height="3"><path d="M0 0L2.5 3L5 0Z" fill="#000"/></svg>
<div class="abs" style="left:1040px;top:922px;width:28px;height:22px;background:#eff4fb;border-right:1px solid #a0a0a0;border-bottom:1px solid #a0a0a0"></div>
<span class="t" style="left:1044px;top:927px;font-size:15px">2</span>
<div class="abs" style="left:1069px;top:923px;width:313px;height:21px;background:#fff;border-bottom:1px solid #a0a0a0"></div>
<div class="abs" style="left:1383px;top:923px;width:155px;height:21px;background:#fff;border-bottom:1px solid #a0a0a0;border-right:1px solid #a0a0a0"></div>
<div class="abs" style="left:1382px;top:922px;width:1px;height:22px;background:#a0a0a0"></div>
<span class="t" style="left:1072px;top:925.5px;font-size:15px">200 m</span>
<span class="t" style="left:1386px;top:925.5px;font-size:15px">2.0 kn</span>
<div class="abs" style="left:1365px;top:923px;width:16px;height:10px;background:#f0f0f0;border:1px solid #fff;border-right:1px solid #808080;border-bottom:1px solid #808080"></div><div class="abs" style="left:1366px;top:924px;width:14px;height:8px;border-right:1px solid #b8b8b8;border-bottom:1px solid #b8b8b8"></div><svg class="abs" style="left:1370px;top:926.5px" width="5" height="3"><path d="M0 3L2.5 0L5 3Z" fill="#000"/></svg><div class="abs" style="left:1365px;top:933px;width:16px;height:11px;background:#f0f0f0;border:1px solid #fff;border-right:1px solid #808080;border-bottom:1px solid #808080"></div><div class="abs" style="left:1366px;top:934px;width:14px;height:9px;border-right:1px solid #b8b8b8;border-bottom:1px solid #b8b8b8"></div><svg class="abs" style="left:1370.5px;top:937px" width="5" height="3"><path d="M0 0L2.5 3L5 0Z" fill="#000"/></svg>
<div class="abs" style="left:1521px;top:923px;width:16px;height:10px;background:#f0f0f0;border:1px solid #fff;border-right:1px solid #808080;border-bottom:1px solid #808080"></div><div class="abs" style="left:1522px;top:924px;width:14px;height:8px;border-right:1px solid #b8b8b8;border-bottom:1px solid #b8b8b8"></div><svg class="abs" style="left:1526px;top:926.5px" width="5" height="3"><path d="M0 3L2.5 0L5 3Z" fill="#000"/></svg><div class="abs" style="left:1521px;top:933px;width:16px;height:11px;background:#f0f0f0;border:1px solid #fff;border-right:1px solid #808080;border-bottom:1px solid #808080"></div><div class="abs" style="left:1522px;top:934px;width:14px;height:9px;border-right:1px solid #b8b8b8;border-bottom:1px solid #b8b8b8"></div><svg class="abs" style="left:1526.5px;top:937px" width="5" height="3"><path d="M0 0L2.5 3L5 0Z" fill="#000"/></svg>
<div class="abs" style="left:1040px;top:944px;width:28px;height:22px;background:#eff4fb;border-right:1px solid #a0a0a0;border-bottom:1px solid #a0a0a0"></div>
<span class="t" style="left:1044px;top:949px;font-size:15px">3</span>
<div class="abs" style="left:1069px;top:945px;width:313px;height:21px;background:#fff;border-bottom:1px solid #a0a0a0"></div>
<div class="abs" style="left:1383px;top:945px;width:155px;height:21px;background:#fff;border-bottom:1px solid #a0a0a0;border-right:1px solid #a0a0a0"></div>
<div class="abs" style="left:1382px;top:944px;width:1px;height:22px;background:#a0a0a0"></div>
<span class="t" style="left:1072px;top:947.5px;font-size:15px">400 m</span>
<span class="t" style="left:1386px;top:947.5px;font-size:15px">3.0 kn</span>
<div class="abs" style="left:1365px;top:945px;width:16px;height:10px;background:#f0f0f0;border:1px solid #fff;border-right:1px solid #808080;border-bottom:1px solid #808080"></div><div class="abs" style="left:1366px;top:946px;width:14px;height:8px;border-right:1px solid #b8b8b8;border-bottom:1px solid #b8b8b8"></div><svg class="abs" style="left:1370px;top:948.5px" width="5" height="3"><path d="M0 3L2.5 0L5 3Z" fill="#000"/></svg><div class="abs" style="left:1365px;top:955px;width:16px;height:11px;background:#f0f0f0;border:1px solid #fff;border-right:1px solid #808080;border-bottom:1px solid #808080"></div><div class="abs" style="left:1366px;top:956px;width:14px;height:9px;border-right:1px solid #b8b8b8;border-bottom:1px solid #b8b8b8"></div><svg class="abs" style="left:1370.5px;top:959px" width="5" height="3"><path d="M0 0L2.5 3L5 0Z" fill="#000"/></svg>
<div class="abs" style="left:1521px;top:945px;width:16px;height:10px;background:#f0f0f0;border:1px solid #fff;border-right:1px solid #808080;border-bottom:1px solid #808080"></div><div class="abs" style="left:1522px;top:946px;width:14px;height:8px;border-right:1px solid #b8b8b8;border-bottom:1px solid #b8b8b8"></div><svg class="abs" style="left:1526px;top:948.5px" width="5" height="3"><path d="M0 3L2.5 0L5 3Z" fill="#000"/></svg><div class="abs" style="left:1521px;top:955px;width:16px;height:11px;background:#f0f0f0;border:1px solid #fff;border-right:1px solid #808080;border-bottom:1px solid #808080"></div><div class="abs" style="left:1522px;top:956px;width:14px;height:9px;border-right:1px solid #b8b8b8;border-bottom:1px solid #b8b8b8"></div><svg class="abs" style="left:1526.5px;top:959px" width="5" height="3"><path d="M0 0L2.5 3L5 0Z" fill="#000"/></svg>
<div class="abs" style="left:1040px;top:966px;width:28px;height:22px;background:#eff4fb;border-right:1px solid #a0a0a0;border-bottom:1px solid #a0a0a0"></div>
<span class="t" style="left:1044px;top:971px;font-size:15px">4</span>
<div class="abs" style="left:1069px;top:967px;width:313px;height:21px;background:#fff;border-bottom:1px solid #a0a0a0"></div>
<div class="abs" style="left:1383px;top:967px;width:155px;height:21px;background:#fff;border-bottom:1px solid #a0a0a0;border-right:1px solid #a0a0a0"></div>
<div class="abs" style="left:1382px;top:966px;width:1px;height:22px;background:#a0a0a0"></div>
<span class="t" style="left:1072px;top:969.5px;font-size:15px">800 m</span>
<span class="t" style="left:1386px;top:969.5px;font-size:15px">4.0 kn</span>
<div class="abs" style="left:1365px;top:967px;width:16px;height:10px;background:#f0f0f0;border:1px solid #fff;border-right:1px solid #808080;border-bottom:1px solid #808080"></div><div class="abs" style="left:1366px;top:968px;width:14px;height:8px;border-right:1px solid #b8b8b8;border-bottom:1px solid #b8b8b8"></div><svg class="abs" style="left:1370px;top:970.5px" width="5" height="3"><path d="M0 3L2.5 0L5 3Z" fill="#000"/></svg><div class="abs" style="left:1365px;top:977px;width:16px;height:11px;background:#f0f0f0;border:1px solid #fff;border-right:1px solid #808080;border-bottom:1px solid #808080"></div><div class="abs" style="left:1366px;top:978px;width:14px;height:9px;border-right:1px solid #b8b8b8;border-bottom:1px solid #b8b8b8"></div><svg class="abs" style="left:1370.5px;top:981px" width="5" height="3"><path d="M0 0L2.5 3L5 0Z" fill="#000"/></svg>
<div class="abs" style="left:1521px;top:967px;width:16px;height:10px;background:#f0f0f0;border:1px solid #fff;border-right:1px solid #808080;border-bottom:1px solid #808080"></div><div class="abs" style="left:1522px;top:968px;width:14px;height:8px;border-right:1px solid #b8b8b8;border-bottom:1px solid #b8b8b8"></div><svg class="abs" style="left:1526px;top:970.5px" width="5" height="3"><path d="M0 3L2.5 0L5 3Z" fill="#000"/></svg><div class="abs" style="left:1521px;top:977px;width:16px;height:11px;background:#f0f0f0;border:1px solid #fff;border-right:1px solid #808080;border-bottom:1px solid #808080"></div><div class="abs" style="left:1522px;top:978px;width:14px;height:9px;border-right:1px solid #b8b8b8;border-bottom:1px solid #b8b8b8"></div><svg class="abs" style="left:1526.5px;top:981px" width="5" height="3"><path d="M0 0L2.5 3L5 0Z" fill="#000"/></svg>
<div class="abs" style="left:1040px;top:988px;width:28px;height:22px;background:#eff4fb;border-right:1px solid #a0a0a0;border-bottom:1px solid #a0a0a0"></div>
<span class="t" style="left:1044px;top:993px;font-size:15px">5</span>
<div class="abs" style="left:1069px;top:989px;width:313px;height:21px;background:#fff;border-bottom:1px solid #a0a0a0"></div>
<div class="abs" style="left:1383px;top:989px;width:155px;height:21px;background:#fff;border-bottom:1px solid #a0a0a0;border-right:1px solid #a0a0a0"></div>
<div class="abs" style="left:1382px;top:988px;width:1px;height:22px;background:#a0a0a0"></div>
<span class="t" style="left:1072px;top:991.5px;font-size:15px">2000 m</span>
<span class="t" style="left:1386px;top:991.5px;font-size:15px">10 kn</span>
<div class="abs" style="left:1365px;top:989px;width:16px;height:10px;background:#f0f0f0;border:1px solid #fff;border-right:1px solid #808080;border-bottom:1px solid #808080"></div><div class="abs" style="left:1366px;top:990px;width:14px;height:8px;border-right:1px solid #b8b8b8;border-bottom:1px solid #b8b8b8"></div><svg class="abs" style="left:1370px;top:992.5px" width="5" height="3"><path d="M0 3L2.5 0L5 3Z" fill="#000"/></svg><div class="abs" style="left:1365px;top:999px;width:16px;height:11px;background:#f0f0f0;border:1px solid #fff;border-right:1px solid #808080;border-bottom:1px solid #808080"></div><div class="abs" style="left:1366px;top:1000px;width:14px;height:9px;border-right:1px solid #b8b8b8;border-bottom:1px solid #b8b8b8"></div><svg class="abs" style="left:1370.5px;top:1003px" width="5" height="3"><path d="M0 0L2.5 3L5 0Z" fill="#000"/></svg>
<div class="abs" style="left:1521px;top:989px;width:16px;height:10px;background:#f0f0f0;border:1px solid #fff;border-right:1px solid #808080;border-bottom:1px solid #808080"></div><div class="abs" style="left:1522px;top:990px;width:14px;height:8px;border-right:1px solid #b8b8b8;border-bottom:1px solid #b8b8b8"></div><svg class="abs" style="left:1526px;top:992.5px" width="5" height="3"><path d="M0 3L2.5 0L5 3Z" fill="#000"/></svg><div class="abs" style="left:1521px;top:999px;width:16px;height:11px;background:#f0f0f0;border:1px solid #fff;border-right:1px solid #808080;border-bottom:1px solid #808080"></div><div class="abs" style="left:1522px;top:1000px;width:14px;height:9px;border-right:1px solid #b8b8b8;border-bottom:1px solid #b8b8b8"></div><svg class="abs" style="left:1526.5px;top:1003px" width="5" height="3"><path d="M0 0L2.5 3L5 0Z" fill="#000"/></svg>
<div class="abs" style="left:1014px;top:1069px;width:88px;height:28px;background:#f0f0f0;border:1px solid #fff;border-right-color:#696969;border-bottom-color:#696969"></div><div class="abs" style="left:1015px;top:1070px;width:86px;height:26px;border:1px solid #f0f0f0;border-right-color:#a0a0a0;border-bottom-color:#a0a0a0"></div><span class="t" style="left:1014px;width:88px;text-align:center;top:1076.7px;font-size:13px">OK</span>
<div class="abs" style="left:1112px;top:1069px;width:88px;height:28px;background:#f0f0f0;border:1px solid #fff;border-right-color:#696969;border-bottom-color:#696969"></div><div class="abs" style="left:1113px;top:1070px;width:86px;height:26px;border:1px solid #f0f0f0;border-right-color:#a0a0a0;border-bottom-color:#a0a0a0"></div><span class="t" style="left:1112px;width:88px;text-align:center;top:1076.7px;font-size:13px">Apply</span>
<div class="abs" style="left:1210px;top:1069px;width:88px;height:28px;background:#f0f0f0;border:1px solid #fff;border-right-color:#696969;border-bottom-color:#696969"></div><div class="abs" style="left:1211px;top:1070px;width:86px;height:26px;border:1px solid #f0f0f0;border-right-color:#a0a0a0;border-bottom-color:#a0a0a0"></div><span class="t" style="left:1210px;width:88px;text-align:center;top:1076.7px;font-size:13px">Cancel</span>
<div class="abs" style="left:1544px;top:1081px;width:20px;height:20px;overflow:hidden;border-radius:0 0 8px 0"><svg width="20" height="20" viewBox="0 0 20 20"><path d="M6.500 20.500L20.500 6.500" stroke="#a0a0a0" stroke-width="2"/><path d="M9.300 20.500L20.500 9.300" stroke="#fff" stroke-width="2"/><path d="M12.100 20.500L20.500 12.100" stroke="#a0a0a0" stroke-width="2.200"/><path d="M15 20.500L20.500 15" stroke="#fff" stroke-width="1.800"/></svg></div>
<div id="status" class="abs">
<div class="abs" style="left:0;top:0;width:1921px;height:4px;background:linear-gradient(#ffffff,#f4f4f4)"></div>
<div class="abs" style="left:0px;top:4px;width:88px;height:21px;border:1px solid #a8a8a8;border-left-color:#c0c0c0;background:#ececec;border-right-color:#fff;border-bottom-color:#fff;overflow:hidden"><span class="t" style="left:2px;top:2.6px;font-size:14.8px;letter-spacing:-0.12px"></span></div>
<div class="abs" style="left:89px;top:4px;width:235px;height:21px;border:1px solid #a8a8a8;border-left-color:#c0c0c0;background:#ececec;border-right-color:#fff;border-bottom-color:#fff;overflow:hidden"><span class="t" style="left:2px;top:2.6px;font-size:14.8px;letter-spacing:-0.32px">Vessel: 52 00.000 N / 004 00.162 E</span></div>
<div class="abs" style="left:327px;top:4px;width:256px;height:21px;border:1px solid #a8a8a8;border-left-color:#c0c0c0;background:#ececec;border-right-color:#fff;border-bottom-color:#fff;overflow:hidden"><span class="t" style="left:2px;top:2.6px;font-size:14.8px;letter-spacing:-0.32px">Cursor: 51 59.36683 N / 004 00.77650 E</span></div>
<div class="abs" style="left:585px;top:4px;width:301px;height:21px;border:1px solid #a8a8a8;border-left-color:#c0c0c0;background:#ececec;border-right-color:#fff;border-bottom-color:#fff;overflow:hidden"><span class="t" style="left:2px;top:2.6px;font-size:14.8px;letter-spacing:-0.24px">Vessel-&gt;Cursor: 0.7 NM / 149.2 °</span></div>
<div class="abs" style="left:888px;top:4px;width:155px;height:21px;border:1px solid #a8a8a8;border-left-color:#c0c0c0;background:#ececec;border-right-color:#fff;border-bottom-color:#fff;overflow:hidden"><span class="t" style="left:2px;top:2.6px;font-size:14.8px;letter-spacing:-0.22px">1:12536 / 0.6 NM</span></div>
<div class="abs" style="left:1045px;top:4px;width:211px;height:21px;border:1px solid #a8a8a8;border-left-color:#c0c0c0;background:#ececec;border-right-color:#fff;border-bottom-color:#fff;overflow:hidden"><span class="t" style="left:2px;top:2.6px;font-size:14.8px;letter-spacing:-0.12px">No active alarm</span></div>
<div class="abs" style="left:0;top:24px;width:1921px;height:1px;background:#b8b8b8"></div>
</div>
</body></html>
